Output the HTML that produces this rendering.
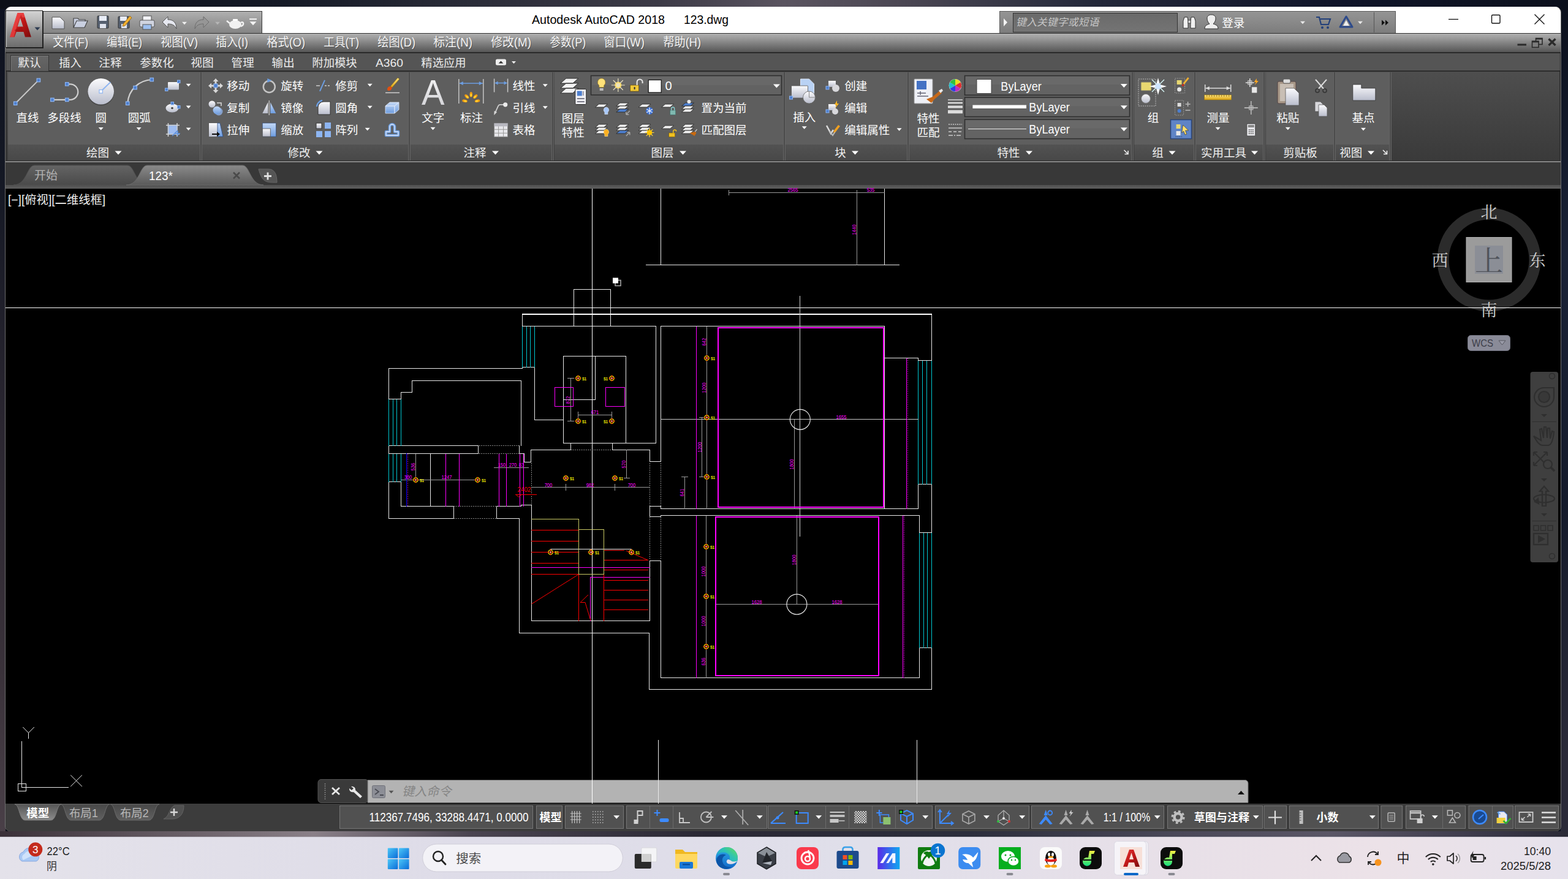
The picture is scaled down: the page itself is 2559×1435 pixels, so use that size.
<!DOCTYPE html><html><head><meta charset="utf-8"><title>AutoCAD</title><style>
html,body{margin:0;padding:0}
body{width:2559px;height:1435px;overflow:hidden;position:relative;font-family:"Liberation Sans","Noto Sans CJK SC",sans-serif;background:#141824}
.a{position:absolute;box-sizing:border-box}
svg text{font-family:"Liberation Sans","Noto Sans CJK SC",sans-serif}
svg text.sf{font-family:"Liberation Serif","Noto Serif CJK SC",serif}

</style></head><body>
<div class="a" style="left:0px;top:0px;width:2559px;height:1366px;background:linear-gradient(90deg,#0c0f18 0%,#151a26 18%,#2a2c38 30%,#3c3a46 42%,#5a5460 50%,#4a4652 58%,#23283a 70%,#10152a 85%,#0b101c 100%)"></div>
<div class="a" style="left:0px;top:14px;width:9px;height:1352px;background:linear-gradient(#0e1220,#141824 20%,#2a2630 50%,#3a323a 80%,#4a4048)"></div>
<div class="a" style="left:2547px;top:14px;width:12px;height:1352px;background:linear-gradient(#0b101c,#1a2236 30%,#141a2a 60%,#2a2a38 90%)"></div>
<div class="a" style="left:0px;top:1357px;width:2559px;height:9px;background:linear-gradient(90deg,#3a3038 0%,#6a6068 12%,#8a8088 20%,#4a4450 30%,#2a2834 45%,#2c2e3c 62%,#4a4858 75%,#5a5666 85%,#3a3848 95%,#2a2a36 100%)"></div>
<div class="a" style="left:8px;top:11px;width:2540px;height:1346px;background:#3a3a3a;border-radius:9px 9px 8px 8px;border:1px solid #6e6e6e"></div>
<div class="a" style="left:9px;top:11px;width:2538px;height:43px;background:#fff;border-radius:9px 9px 0 0"></div>
<div class="a" style="left:9px;top:54px;width:2538px;height:33px;background:linear-gradient(#bababa 0%,#adadad 4%,#989898 28%,#787878 62%,#565656 100%);border-top:1px solid #2c2c2c;border-bottom:2px solid #2a2a2a"></div>
<div class="a" style="left:69px;top:18px;width:359px;height:36px;background:linear-gradient(#b0b0b0,#9a9a9a 45%,#848484);border:1px solid #3c3c3c;border-bottom:none"></div>
<div class="a" style="left:9px;top:17px;width:61px;height:61px;background:linear-gradient(#d2d2d2,#bcbcbc 25%,#8e8e8e 60%,#6c6c6c);border:1px solid #1e1e1e;box-shadow:inset 1px 1px 0 #e0e0e0,1px 1px 0 #222"></div>
<div class="a" style="left:1631px;top:18px;width:647px;height:36px;background:linear-gradient(#949494,#8a8a8a 45%,#7c7c7c);border:1px solid #5a5a5a;border-bottom:none"></div>
<div class="a" style="left:1653px;top:21px;width:269px;height:32px;background:linear-gradient(#6a6a6a,#747474);border:1px solid #333"></div>
<div class="a" style="left:9px;top:87px;width:2538px;height:30px;background:#555;border-left:1px solid #303030;border-right:1px solid #303030;border-bottom:2px solid #2c2c2c"></div>
<div class="a" style="left:17px;top:90px;width:63px;height:26px;background:linear-gradient(#666,#5c5c5c);border:1px solid #353535;border-bottom:none;box-shadow:inset 1px 1px 0 #7a7a7a"></div>
<div class="a" style="left:9px;top:117px;width:2538px;height:146px;background:linear-gradient(#4e4e4e,#3a3a3a);border-left:2px solid #333;border-right:2px solid #333;border-bottom:1.5px solid #2a2a2a"></div>
<div class="a" style="left:9px;top:263px;width:2538px;height:2px;background:#868686"></div>
<div class="a" style="left:13px;top:118px;width:314px;height:118px;background:#5e5e5e"></div>
<div class="a" style="left:13px;top:236px;width:314px;height:26px;background:linear-gradient(#525252,#484848)"></div>
<div class="a" style="left:326px;top:118px;width:1px;height:144px;background:#646464"></div>
<div class="a" style="left:327px;top:118px;width:2px;height:144px;background:#4b4b4b"></div>
<div class="a" style="left:329px;top:118px;width:1px;height:144px;background:#646464"></div>
<div class="a" style="left:330px;top:118px;width:337px;height:118px;background:#5e5e5e"></div>
<div class="a" style="left:330px;top:236px;width:337px;height:26px;background:linear-gradient(#525252,#484848)"></div>
<div class="a" style="left:666px;top:118px;width:1px;height:144px;background:#646464"></div>
<div class="a" style="left:667px;top:118px;width:2px;height:144px;background:#4b4b4b"></div>
<div class="a" style="left:669px;top:118px;width:1px;height:144px;background:#646464"></div>
<div class="a" style="left:670px;top:118px;width:231px;height:118px;background:#5e5e5e"></div>
<div class="a" style="left:670px;top:236px;width:231px;height:26px;background:linear-gradient(#525252,#484848)"></div>
<div class="a" style="left:900px;top:118px;width:1px;height:144px;background:#646464"></div>
<div class="a" style="left:901px;top:118px;width:2px;height:144px;background:#4b4b4b"></div>
<div class="a" style="left:903px;top:118px;width:1px;height:144px;background:#646464"></div>
<div class="a" style="left:905px;top:118px;width:374px;height:118px;background:#5e5e5e"></div>
<div class="a" style="left:905px;top:236px;width:374px;height:26px;background:linear-gradient(#525252,#484848)"></div>
<div class="a" style="left:1278px;top:118px;width:1px;height:144px;background:#646464"></div>
<div class="a" style="left:1279px;top:118px;width:2px;height:144px;background:#4b4b4b"></div>
<div class="a" style="left:1281px;top:118px;width:1px;height:144px;background:#646464"></div>
<div class="a" style="left:1282px;top:118px;width:199px;height:118px;background:#5e5e5e"></div>
<div class="a" style="left:1282px;top:236px;width:199px;height:26px;background:linear-gradient(#525252,#484848)"></div>
<div class="a" style="left:1480px;top:118px;width:1px;height:144px;background:#646464"></div>
<div class="a" style="left:1481px;top:118px;width:2px;height:144px;background:#4b4b4b"></div>
<div class="a" style="left:1483px;top:118px;width:1px;height:144px;background:#646464"></div>
<div class="a" style="left:1484px;top:118px;width:363px;height:118px;background:#5e5e5e"></div>
<div class="a" style="left:1484px;top:236px;width:363px;height:26px;background:linear-gradient(#525252,#484848)"></div>
<div class="a" style="left:1846px;top:118px;width:1px;height:144px;background:#646464"></div>
<div class="a" style="left:1847px;top:118px;width:2px;height:144px;background:#4b4b4b"></div>
<div class="a" style="left:1849px;top:118px;width:1px;height:144px;background:#646464"></div>
<div class="a" style="left:1851px;top:118px;width:98px;height:118px;background:#5e5e5e"></div>
<div class="a" style="left:1851px;top:236px;width:98px;height:26px;background:linear-gradient(#525252,#484848)"></div>
<div class="a" style="left:1948px;top:118px;width:1px;height:144px;background:#646464"></div>
<div class="a" style="left:1949px;top:118px;width:2px;height:144px;background:#4b4b4b"></div>
<div class="a" style="left:1951px;top:118px;width:1px;height:144px;background:#646464"></div>
<div class="a" style="left:1952px;top:118px;width:110px;height:118px;background:#5e5e5e"></div>
<div class="a" style="left:1952px;top:236px;width:110px;height:26px;background:linear-gradient(#525252,#484848)"></div>
<div class="a" style="left:2061px;top:118px;width:1px;height:144px;background:#646464"></div>
<div class="a" style="left:2062px;top:118px;width:2px;height:144px;background:#4b4b4b"></div>
<div class="a" style="left:2064px;top:118px;width:1px;height:144px;background:#646464"></div>
<div class="a" style="left:2066px;top:118px;width:111px;height:118px;background:#5e5e5e"></div>
<div class="a" style="left:2066px;top:236px;width:111px;height:26px;background:linear-gradient(#525252,#484848)"></div>
<div class="a" style="left:2176px;top:118px;width:1px;height:144px;background:#646464"></div>
<div class="a" style="left:2177px;top:118px;width:2px;height:144px;background:#4b4b4b"></div>
<div class="a" style="left:2179px;top:118px;width:1px;height:144px;background:#646464"></div>
<div class="a" style="left:2180px;top:118px;width:88px;height:118px;background:#5e5e5e"></div>
<div class="a" style="left:2180px;top:236px;width:88px;height:26px;background:linear-gradient(#525252,#484848)"></div>
<div class="a" style="left:2267px;top:118px;width:1px;height:144px;background:#646464"></div>
<div class="a" style="left:2268px;top:118px;width:2px;height:144px;background:#4b4b4b"></div>
<div class="a" style="left:2270px;top:118px;width:1px;height:144px;background:#646464"></div>
<div class="a" style="left:9px;top:265px;width:2538px;height:37px;background:#383838"></div>
<div class="a" style="left:9px;top:302px;width:2538px;height:6px;background:linear-gradient(#505050,#5e5e5e)"></div>
<div class="a" style="left:9px;top:308px;width:2538px;height:1004px;background:#000"></div>
<div class="a" style="left:9px;top:1312px;width:2538px;height:45px;background:#3c3c3c;border-radius:0 0 8px 8px"></div>
<div class="a" style="left:0px;top:1366px;width:2559px;height:69px;background:linear-gradient(90deg,#e4e2ea 0%,#dedce8 30%,#e0dfea 55%,#e8e0e8 75%,#ece2e8 88%,#e6e2ec 100%);border-top:1px solid #c8c6d0"></div>
<svg class="a" style="left:0;top:0" width="2559" height="1435" viewBox="0 0 2559 1435">
<defs><linearGradient id="gw" x1="0" y1="0" x2="0" y2="1"><stop offset="0" stop-color="#fbfbfd"/><stop offset="1" stop-color="#b9bdcc"/></linearGradient><linearGradient id="gb" x1="0" y1="0" x2="0" y2="1"><stop offset="0" stop-color="#c3d8f6"/><stop offset="1" stop-color="#6e9de0"/></linearGradient><linearGradient id="gr" x1="0" y1="0" x2="1" y2="1"><stop offset="0" stop-color="#e83a3a"/><stop offset="0.5" stop-color="#c01818"/><stop offset="1" stop-color="#7a0c0c"/></linearGradient><linearGradient id="gy" x1="0" y1="0" x2="0" y2="1"><stop offset="0" stop-color="#ffe680"/><stop offset="1" stop-color="#d8a010"/></linearGradient><linearGradient id="ga" x1="0" y1="0" x2="0" y2="1"><stop offset="0" stop-color="#f6f6f6"/><stop offset="1" stop-color="#cfcfd4"/></linearGradient><linearGradient id="gt1" x1="0" y1="0" x2="0" y2="1"><stop offset="0" stop-color="#646464"/><stop offset="1" stop-color="#4a4a4a"/></linearGradient><linearGradient id="gt2" x1="0" y1="0" x2="0" y2="1"><stop offset="0" stop-color="#8a8a8a"/><stop offset="1" stop-color="#5a5a5a"/></linearGradient><linearGradient id="gl1" x1="0" y1="0" x2="0" y2="1"><stop offset="0" stop-color="#555"/><stop offset="1" stop-color="#8c8c8c"/></linearGradient><linearGradient id="gl2" x1="0" y1="0" x2="0" y2="1"><stop offset="0" stop-color="#484848"/><stop offset="1" stop-color="#606060"/></linearGradient><linearGradient id="tw" x1="0" y1="0" x2="1" y2="1"><stop offset="0" stop-color="#4cc8f8"/><stop offset="1" stop-color="#0a6cd8"/></linearGradient><linearGradient id="tma" x1="0" y1="0" x2="1" y2="0"><stop offset="0" stop-color="#5a2ae8"/><stop offset="1" stop-color="#10a8f0"/></linearGradient><linearGradient id="tqm" x1="0" y1="0" x2="0" y2="1"><stop offset="0" stop-color="#f8f040"/><stop offset="1" stop-color="#10e080"/></linearGradient><linearGradient id="ted" x1="0" y1="0" x2="0" y2="1"><stop offset="0" stop-color="#2aa8e8"/><stop offset="1" stop-color="#1468c8"/></linearGradient><linearGradient id="ted2" x1="0" y1="1" x2="1" y2="0"><stop offset="0" stop-color="#1b9de2"/><stop offset=".6" stop-color="#30c4b0"/><stop offset="1" stop-color="#6be04e"/></linearGradient></defs>
<rect x="519" y="1272.5" width="82" height="38" rx="5" fill="#3a3a3a" stroke="#555" stroke-width="1"/>
<path d="M600 1273.5H2032a5 5 0 0 1 5 5V1310.5H600Z" fill="#b3b3b3" stroke="#6a6a6a" stroke-width="1"/>
<circle cx="2430" cy="424" r="75" fill="none" stroke="#2b2b2b" stroke-width="19"/>
<path d="M966.5 308V1312M9 502.5H2547" fill="none" stroke="#ffffff" stroke-width="1" shape-rendering="crispEdges"/>
<path d="M936 472.5H997M936 532.5H997M936.5 472V533M996.5 472V533M1078.5 308V433M1054 432.5H1468M1443.5 308V433M852.5 512V533M1520.5 512V589M852 532.5H1071M1070.5 532V724M852 599.5H873M852.5 599V602M872.5 599V686M872 685.5H920M634 601.5H853M634.5 601V652M634 651.5H655M654.5 640V652M654 640.5H673M672.5 621V641M672 621.5H851M850.5 621V728M634 727.5H781M780.5 727V741M634 740.5H781M634.5 727V741M847.5 727V741M847 740.5H856M855.5 740V755M855 754.5H867M866.5 734V755M866 734.5H932M931.5 723V735M919 723.5H1071M919.5 581V724M919 581.5H1022M1021.5 581V724M971.5 581V653M919 652.5H972M999.5 723V735M999 734.5H1061M1060.5 734V754M1060 753.5H1079M1078.5 532V754M1078 532.5H1444M1443.5 532V585M1443 584.5H1499M1498.5 584V589M1443.5 584V831M1078 830.5H1499M1078 841.5H1501M1500.5 841V870M1500 869.5H1521M1520.5 790V870M1498 790.5H1521M1498.5 790V831M1498 588.5H1521M1500 1057.5H1521M1500.5 1057V1107M1078 1106.5H1501M1078.5 915V1107M1520.5 1057V1126M1059 1125.5H1521M1059.5 1033V1126M847 1033.5H1060M847.5 846V1034M867.5 824V1014M867 1013.5H1061M1060.5 915V1014M1060 915.5H1079M1060 826.5H1079M1060.5 826V844M1060 843.5H1079M1078.5 826V831M1078.5 841V844M634 786.5H655M634.5 740V847M654.5 786V827M654 826.5H741M810 826.5H851M740.5 826V847M634 846.5H741M810 846.5H848M810.5 826V847M702.5 740V827M850.5 824V827M850 824.5H868M898 896.5H1031M1074.5 1208V1312M1496.5 1208V1312M35.5 1210V1286M35 1285.5H112M29 1279.5H43M29 1291.5H43M29.5 1279V1292M42.5 1279V1292" fill="none" stroke="#e8e8e8" stroke-width="1" shape-rendering="crispEdges"/>
<path d="M1189 314.5H1444M1398.5 314V433M1189.5 310V319M1398.5 310V319M1153.5 533V831M1145.5 681V779M1117.5 778V831M1296.5 684V831M1152.5 842V1107M1300.5 842V987M1168 986.5H1434M1141 681.5H1154M1141 778.5H1154M1112 778.5H1123M678.5 741V784M654 783.5H780M806 763.5H863M867 795.5H1061M923.5 790V801M1003.5 790V801M1022.5 734V781M1018 780.5H1028M931.5 617V688M926 617.5H937M926 687.5H937M943 677.5H999M943.5 672V683M998.5 672V683" fill="none" stroke="#9a9a9a" stroke-width="1" shape-rendering="crispEdges"/>
<path d="M852 512.5H1521" fill="none" stroke="#ffffff" stroke-width="2" shape-rendering="crispEdges"/>
<path d="M852.5 533V600M859.5 533V600M865.5 533V600M872.5 533V600M634.5 652V728M641.5 652V728M647.5 652V728M654.5 652V728M1498.5 589V791M1505.5 589V791M1512.5 589V791M1520.5 589V791M1500.5 870V1058M1507.5 870V1058M1513.5 870V1058M1520.5 870V1058M634.5 741V787M641.5 741V787M647.5 741V787M654.5 741V787" fill="none" stroke="#00c8d2" stroke-width="1" shape-rendering="crispEdges"/>
<path d="M782 727.5H848M782 740.5H848M933 734.5H1000M742 826.5H811M742 846.5H811M867.5 756V823M1060.5 756V826M1060.5 845V914M1078.5 756V826M1078.5 845V914" fill="none" stroke="#e8e8e8" stroke-width="1" shape-rendering="crispEdges" stroke-dasharray="1 2"/>
<path d="M1078 684.5H1499" fill="none" stroke="#c8c8c8" stroke-width="1" shape-rendering="crispEdges"/>
<path d="M1305.5 483V876" fill="none" stroke="#d0d0d0" stroke-width="1" shape-rendering="crispEdges"/>
<path d="M663.5 740V827" fill="none" stroke="#0000ff" stroke-width="1" shape-rendering="crispEdges"/>
<path d="M665.5 741V827M1481.5 585V831M1475.5 842V1107" fill="none" stroke="#ff00ff" stroke-width="1" shape-rendering="crispEdges" stroke-dasharray="1 2"/>
<path d="M727.5 741V827M749.5 741V827M814.5 741V827M826.5 741V827M848.5 741V827M854.5 741V827M1136.5 533V831M1136.5 842V1107M1479.5 585V831M1473.5 842V1107M867 926.5H1061M963 942.5H1061M963.5 942V1014M905 632.5H936M905 663.5H936M905.5 632V664M935.5 632V664M988 632.5H1020M988 663.5H1020M988.5 632V664M1019.5 632V664" fill="none" stroke="#ff00ff" stroke-width="1" shape-rendering="crispEdges"/>
<path d="M867 865.5H944M867 883.5H944M867 901.5H944M867 919.5H944M867 937.5H944M985 914.5H1058M985 930.5H1058M985 947.5H1058M985 963.5H1058M985 979.5H1058M985 995.5H1058M985 898.5H1019M944.5 937V1014M985.5 937V1014M841 807.5H876" fill="none" stroke="#ff0000" stroke-width="1" shape-rendering="crispEdges"/>
<path d="M867.5 986L944.5 937.5M1022 899L1057.5 914.5M960 971L947 983.5L955 983.5L964 1013M842 807.5L851 807.5L846.5 811.5L842 807.5" fill="none" stroke="#ff0000" stroke-width="1" shape-rendering="geometricPrecision"/>
<path d="M867 847.5H945M944.5 847V938M944 937.5H986M985.5 864V938M944 864.5H986" fill="none" stroke="#c8c864" stroke-width="1" shape-rendering="crispEdges"/>
<path d="M37.3 1187L46.5 1196.4L55.8 1187M46.5 1196.4L46.5 1206M115.2 1265.4L133.9 1284M133.9 1265.4L115.2 1284" fill="none" stroke="#e8e8e8" stroke-width="1" shape-rendering="geometricPrecision"/>
<rect x="1171.5" y="535" width="270" height="293" fill="none" stroke="#ff00ff" stroke-width="2" shape-rendering="crispEdges"/>
<rect x="1168" y="844" width="265.5" height="259" fill="none" stroke="#ff00ff" stroke-width="2" shape-rendering="crispEdges"/>
<circle cx="1305.8" cy="684.8" r="16.5" fill="none" stroke="#e8e8e8" stroke-width="1.2"/>
<circle cx="1300.4" cy="986.6" r="16.5" fill="none" stroke="#e8e8e8" stroke-width="1.2"/>
<g transform="translate(943.5,617.5)"><circle r="3.6" fill="none" stroke="#ffe000" stroke-width="1.3"/><path d="M-5 0H5M0 -5V5" stroke="#ff2000" stroke-width="1"/><circle r="1.2" fill="#ffb0a0"/></g>
<text x="950" y="621" font-size="8" font-weight="bold" fill="#ffff00" textLength="7" lengthAdjust="spacingAndGlyphs">S1</text>
<g transform="translate(943.5,687.5)"><circle r="3.6" fill="none" stroke="#ffe000" stroke-width="1.3"/><path d="M-5 0H5M0 -5V5" stroke="#ff2000" stroke-width="1"/><circle r="1.2" fill="#ffb0a0"/></g>
<text x="950" y="691" font-size="8" font-weight="bold" fill="#ffff00" textLength="7" lengthAdjust="spacingAndGlyphs">S1</text>
<g transform="translate(678.5,783.5)"><circle r="3.6" fill="none" stroke="#ffe000" stroke-width="1.3"/><path d="M-5 0H5M0 -5V5" stroke="#ff2000" stroke-width="1"/><circle r="1.2" fill="#ffb0a0"/></g>
<text x="685" y="787" font-size="8" font-weight="bold" fill="#ffff00" textLength="7" lengthAdjust="spacingAndGlyphs">S1</text>
<g transform="translate(779.5,783.5)"><circle r="3.6" fill="none" stroke="#ffe000" stroke-width="1.3"/><path d="M-5 0H5M0 -5V5" stroke="#ff2000" stroke-width="1"/><circle r="1.2" fill="#ffb0a0"/></g>
<text x="786" y="787" font-size="8" font-weight="bold" fill="#ffff00" textLength="7" lengthAdjust="spacingAndGlyphs">S1</text>
<g transform="translate(923.5,780.5)"><circle r="3.6" fill="none" stroke="#ffe000" stroke-width="1.3"/><path d="M-5 0H5M0 -5V5" stroke="#ff2000" stroke-width="1"/><circle r="1.2" fill="#ffb0a0"/></g>
<text x="930" y="784" font-size="8" font-weight="bold" fill="#ffff00" textLength="7" lengthAdjust="spacingAndGlyphs">S1</text>
<g transform="translate(1003.5,780.5)"><circle r="3.6" fill="none" stroke="#ffe000" stroke-width="1.3"/><path d="M-5 0H5M0 -5V5" stroke="#ff2000" stroke-width="1"/><circle r="1.2" fill="#ffb0a0"/></g>
<text x="1010" y="784" font-size="8" font-weight="bold" fill="#ffff00" textLength="7" lengthAdjust="spacingAndGlyphs">S1</text>
<g transform="translate(1153.5,584.5)"><circle r="3.6" fill="none" stroke="#ffe000" stroke-width="1.3"/><path d="M-5 0H5M0 -5V5" stroke="#ff2000" stroke-width="1"/><circle r="1.2" fill="#ffb0a0"/></g>
<text x="1160" y="588" font-size="8" font-weight="bold" fill="#ffff00" textLength="7" lengthAdjust="spacingAndGlyphs">S1</text>
<g transform="translate(1153.5,681.5)"><circle r="3.6" fill="none" stroke="#ffe000" stroke-width="1.3"/><path d="M-5 0H5M0 -5V5" stroke="#ff2000" stroke-width="1"/><circle r="1.2" fill="#ffb0a0"/></g>
<text x="1160" y="685" font-size="8" font-weight="bold" fill="#ffff00" textLength="7" lengthAdjust="spacingAndGlyphs">S1</text>
<g transform="translate(1153.5,778.5)"><circle r="3.6" fill="none" stroke="#ffe000" stroke-width="1.3"/><path d="M-5 0H5M0 -5V5" stroke="#ff2000" stroke-width="1"/><circle r="1.2" fill="#ffb0a0"/></g>
<text x="1160" y="782" font-size="8" font-weight="bold" fill="#ffff00" textLength="7" lengthAdjust="spacingAndGlyphs">S1</text>
<g transform="translate(1152.5,892.5)"><circle r="3.6" fill="none" stroke="#ffe000" stroke-width="1.3"/><path d="M-5 0H5M0 -5V5" stroke="#ff2000" stroke-width="1"/><circle r="1.2" fill="#ffb0a0"/></g>
<text x="1159" y="896" font-size="8" font-weight="bold" fill="#ffff00" textLength="7" lengthAdjust="spacingAndGlyphs">S1</text>
<g transform="translate(1152.5,973.5)"><circle r="3.6" fill="none" stroke="#ffe000" stroke-width="1.3"/><path d="M-5 0H5M0 -5V5" stroke="#ff2000" stroke-width="1"/><circle r="1.2" fill="#ffb0a0"/></g>
<text x="1159" y="977" font-size="8" font-weight="bold" fill="#ffff00" textLength="7" lengthAdjust="spacingAndGlyphs">S1</text>
<g transform="translate(1152.5,1055.5)"><circle r="3.6" fill="none" stroke="#ffe000" stroke-width="1.3"/><path d="M-5 0H5M0 -5V5" stroke="#ff2000" stroke-width="1"/><circle r="1.2" fill="#ffb0a0"/></g>
<text x="1159" y="1059" font-size="8" font-weight="bold" fill="#ffff00" textLength="7" lengthAdjust="spacingAndGlyphs">S1</text>
<g transform="translate(898.5,901.5)"><circle r="3.6" fill="none" stroke="#ffe000" stroke-width="1.3"/><path d="M-5 0H5M0 -5V5" stroke="#ff2000" stroke-width="1"/><circle r="1.2" fill="#ffb0a0"/></g>
<text x="905" y="905" font-size="8" font-weight="bold" fill="#ffff00" textLength="7" lengthAdjust="spacingAndGlyphs">S1</text>
<g transform="translate(964.5,901.5)"><circle r="3.6" fill="none" stroke="#ffe000" stroke-width="1.3"/><path d="M-5 0H5M0 -5V5" stroke="#ff2000" stroke-width="1"/><circle r="1.2" fill="#ffb0a0"/></g>
<text x="971" y="905" font-size="8" font-weight="bold" fill="#ffff00" textLength="7" lengthAdjust="spacingAndGlyphs">S1</text>
<g transform="translate(1030.5,901.5)"><circle r="3.6" fill="none" stroke="#ffe000" stroke-width="1.3"/><path d="M-5 0H5M0 -5V5" stroke="#ff2000" stroke-width="1"/><circle r="1.2" fill="#ffb0a0"/></g>
<text x="1037" y="905" font-size="8" font-weight="bold" fill="#ffff00" textLength="7" lengthAdjust="spacingAndGlyphs">S1</text>
<g transform="translate(998.5,617.5)"><circle r="3.6" fill="none" stroke="#ffe000" stroke-width="1.3"/><path d="M-5 0H5M0 -5V5" stroke="#ff2000" stroke-width="1"/><circle r="1.2" fill="#ffb0a0"/></g>
<text x="985" y="621" font-size="8" font-weight="bold" fill="#ffff00" textLength="7" lengthAdjust="spacingAndGlyphs">S1</text>
<g transform="translate(998.5,687.5)"><circle r="3.6" fill="none" stroke="#ffe000" stroke-width="1.3"/><path d="M-5 0H5M0 -5V5" stroke="#ff2000" stroke-width="1"/><circle r="1.2" fill="#ffb0a0"/></g>
<text x="985" y="691" font-size="8" font-weight="bold" fill="#ffff00" textLength="7" lengthAdjust="spacingAndGlyphs">S1</text>
<text x="1294" y="313" font-size="8.5" fill="#ff00ff" text-anchor="middle" textLength="17" lengthAdjust="spacingAndGlyphs">2565</text>
<text x="1421" y="313" font-size="8.5" fill="#ff00ff" text-anchor="middle" textLength="12.75" lengthAdjust="spacingAndGlyphs">535</text>
<text transform="translate(1397,375) rotate(-90)" font-size="8.5" fill="#ff00ff" text-anchor="middle" textLength="17" lengthAdjust="spacingAndGlyphs">1440</text>
<text transform="translate(1152,558) rotate(-90)" font-size="8.5" fill="#ff00ff" text-anchor="middle" textLength="12.75" lengthAdjust="spacingAndGlyphs">642</text>
<text transform="translate(1152,633) rotate(-90)" font-size="8.5" fill="#ff00ff" text-anchor="middle" textLength="17" lengthAdjust="spacingAndGlyphs">1200</text>
<text transform="translate(1145,730) rotate(-90)" font-size="8.5" fill="#ff00ff" text-anchor="middle" textLength="17" lengthAdjust="spacingAndGlyphs">1200</text>
<text transform="translate(1116,804) rotate(-90)" font-size="8.5" fill="#ff00ff" text-anchor="middle" textLength="12.75" lengthAdjust="spacingAndGlyphs">641</text>
<text transform="translate(1295,758) rotate(-90)" font-size="8.5" fill="#ff00ff" text-anchor="middle" textLength="17" lengthAdjust="spacingAndGlyphs">1800</text>
<text x="1373" y="684" font-size="8.5" fill="#ff00ff" text-anchor="middle" textLength="17" lengthAdjust="spacingAndGlyphs">1655</text>
<text transform="translate(1151,933) rotate(-90)" font-size="8.5" fill="#ff00ff" text-anchor="middle" textLength="17" lengthAdjust="spacingAndGlyphs">1000</text>
<text transform="translate(1151,1014) rotate(-90)" font-size="8.5" fill="#ff00ff" text-anchor="middle" textLength="17" lengthAdjust="spacingAndGlyphs">1000</text>
<text transform="translate(1151,1080) rotate(-90)" font-size="8.5" fill="#ff00ff" text-anchor="middle" textLength="12.75" lengthAdjust="spacingAndGlyphs">636</text>
<text transform="translate(1299,914) rotate(-90)" font-size="8.5" fill="#ff00ff" text-anchor="middle" textLength="17" lengthAdjust="spacingAndGlyphs">1800</text>
<text x="1235" y="986" font-size="8.5" fill="#ff00ff" text-anchor="middle" textLength="17" lengthAdjust="spacingAndGlyphs">1628</text>
<text x="1366" y="986" font-size="8.5" fill="#ff00ff" text-anchor="middle" textLength="17" lengthAdjust="spacingAndGlyphs">1628</text>
<text transform="translate(677,762) rotate(-90)" font-size="8.5" fill="#ff00ff" text-anchor="middle" textLength="12.75" lengthAdjust="spacingAndGlyphs">536</text>
<text x="666" y="782" font-size="8.5" fill="#ff00ff" text-anchor="middle" textLength="12.75" lengthAdjust="spacingAndGlyphs">300</text>
<text x="729" y="782" font-size="8.5" fill="#ff00ff" text-anchor="middle" textLength="17" lengthAdjust="spacingAndGlyphs">1247</text>
<text x="819" y="762" font-size="8.5" fill="#ff00ff" text-anchor="middle" textLength="12.75" lengthAdjust="spacingAndGlyphs">150</text>
<text x="837" y="762" font-size="8.5" fill="#ff00ff" text-anchor="middle" textLength="12.75" lengthAdjust="spacingAndGlyphs">270</text>
<text x="851" y="762" font-size="8.5" fill="#ff00ff" text-anchor="middle" textLength="8.5" lengthAdjust="spacingAndGlyphs">83</text>
<text x="895" y="795" font-size="8.5" fill="#ff00ff" text-anchor="middle" textLength="12.75" lengthAdjust="spacingAndGlyphs">700</text>
<text x="963" y="795" font-size="8.5" fill="#ff00ff" text-anchor="middle" textLength="12.75" lengthAdjust="spacingAndGlyphs">982</text>
<text x="1031" y="795" font-size="8.5" fill="#ff00ff" text-anchor="middle" textLength="12.75" lengthAdjust="spacingAndGlyphs">700</text>
<text transform="translate(1021,758) rotate(-90)" font-size="8.5" fill="#ff00ff" text-anchor="middle" textLength="12.75" lengthAdjust="spacingAndGlyphs">570</text>
<text transform="translate(930,653) rotate(-90)" font-size="8.5" fill="#ff00ff" text-anchor="middle" textLength="12.75" lengthAdjust="spacingAndGlyphs">872</text>
<text x="971" y="676" font-size="8.5" fill="#ff00ff" text-anchor="middle" textLength="12.75" lengthAdjust="spacingAndGlyphs">671</text>
<text x="855.5" y="803" font-size="11" fill="#ff0000" text-anchor="middle" textLength="22" lengthAdjust="spacingAndGlyphs">2402</text>
<rect x="1004" y="457.5" width="9" height="9" fill="none" stroke="#aaa" stroke-width="1.5"/><rect x="1000" y="453.5" width="9" height="9" fill="#fff"/>
<g transform="translate(13.0,332.6)" fill="#f0f0f0"><text x="0" y="0" font-size="19.5" textLength="159.1" lengthAdjust="spacingAndGlyphs">[−][俯视][二维线框]</text></g>
<rect x="2393" y="387.5" width="74" height="73" fill="#9b9b9b" stroke="#b0b0b0" stroke-width="1"/>
<rect x="2407" y="401" width="46" height="46" fill="#8b8e96"/>
<g transform="translate(2407.0,441.8)" fill="#50535a"><text class="sf" x="0" y="0" font-size="46">上</text></g>
<g transform="translate(2416.5,355.9)" fill="#cfcfcf"><text class="sf" x="0" y="0" font-size="27">北</text></g>
<g transform="translate(2416.5,515.9)" fill="#cfcfcf"><text class="sf" x="0" y="0" font-size="27">南</text></g>
<g transform="translate(2336.5,434.9)" fill="#cfcfcf"><text class="sf" x="0" y="0" font-size="27">西</text></g>
<g transform="translate(2495.5,434.9)" fill="#cfcfcf"><text class="sf" x="0" y="0" font-size="27">东</text></g>
<rect x="2395.5" y="547.5" width="69" height="25" rx="5" fill="#8a8b98" stroke="#6e6f7c"/>
<text x="2402" y="566" font-size="16" fill="#3c3d48" textLength="35" lengthAdjust="spacingAndGlyphs">WCS</text>
<path d="M2446 556h11l-5.5 7z" fill="#9a9ba8" stroke="#55565f" stroke-width="1"/>
<rect x="2497.5" y="607" width="45.5" height="311" rx="4" fill="#3f3f3f"/>
<g fill="none" stroke="#2f2f2f" stroke-width="2.2">
<circle cx="2533" cy="614" r="4.5" stroke-width="1.5"/><circle cx="2533" cy="908" r="4.5" stroke-width="1.5"/>
<path d="M2504 648a16 16 0 1 0 32 0v-15h-16a16 16 0 0 0 -16 15z"/><circle cx="2520" cy="648" r="9" fill="#383838"/>
<path d="M2500.500 688.500H2540M2500.500 850.500H2540" stroke-width="1"/>
<path d="M2503 712c5 8 8 14 14 15h10c6-1 8-12 9-22l-3-1-3 12-1-17-3 0-1 16-2-18h-3l-1 18-3-15-3 1 2 18z"/>
<path d="M2503 738l22 22M2525 738l-22 22M2503 738h6M2503 738v6M2525 738h-6M2525 738v6M2503 760h6M2503 760v-6"/><circle cx="2526" cy="758" r="7" fill="#3f3f3f"/><path d="M2531 763l6 6" stroke-width="3.5"/>
<path d="M2517 826v-24h-4l7-8 7 8h-4v24z"/><ellipse cx="2520" cy="814" rx="17" ry="6.500"/><path d="M2510 814l-5 5 6 3z" fill="#2f2f2f"/>
<rect x="2503" y="858" width="8" height="8" stroke-width="1.5"/><rect x="2514.500" y="858" width="8" height="8" stroke-width="1.5"/><rect x="2526" y="858" width="8" height="8" stroke-width="1.5"/><rect x="2503" y="871" width="23" height="18"/>
</g>
<path d="M2515 676h10l-5 5zM2515 781h10l-5 5zM2515 838h10l-5 5zM2510 873.500v13l12-6.500z" fill="#2f2f2f"/>
<g transform="translate(16,21) scale(.833,.94) translate(-17,-22)"><path d="M17 64L32 22h12l15 42h-12l-3-9H30l-4 9zM32 46h11l-5.500-15z" fill="url(#gr)"/><path d="M32 22h12l3 8h-6l-2-5-8 20-6 19h-8z" fill="#ff5a5a" opacity=".5"/><path d="M26 52l14-6 4 9H30z" fill="#a01010" opacity=".6"/></g>
<path d="M56.5 44.5h9l-4.5 5z" fill="#2c3a50"/>
<g transform="translate(95,37)"><path d="M-10-9h13l7 7v12h-20z" fill="url(#gw)" stroke="#555" stroke-width="1"/></g>
<g transform="translate(131,37)"><path d="M-11 8l5-11h18l-5 11zM-11 8v-15h7l2 2h10v3" fill="#c9cfe0" stroke="#444" stroke-width="1.2"/></g>
<g transform="translate(168,36)"><rect x="-9" y="-10" width="18" height="20" rx="1" fill="#566070" stroke="#333"/><rect x="-6" y="-10" width="12" height="8" fill="#e8ecf6"/><rect x="-5" y="3" width="10" height="7" fill="#dfe3ee"/></g>
<g transform="translate(203,36)"><rect x="-10" y="-9" width="18" height="19" rx="1" fill="#566070" stroke="#333"/><rect x="-7" y="-9" width="11" height="7" fill="#e8ecf6"/><rect x="-5" y="3" width="9" height="7" fill="#dfe3ee"/><path d="M-2 3l11-13 3 3-11 13-4 1z" fill="#f0b030" stroke="#8a5a10" stroke-width=".8"/></g>
<g transform="translate(240,37)"><rect x="-7" y="-11" width="14" height="8" fill="#f4f4f8" stroke="#555"/><rect x="-12" y="-4" width="24" height="11" rx="2" fill="#d0d4e0" stroke="#555"/><rect x="-7" y="3" width="14" height="8" fill="#9ec0f0" stroke="#555"/></g>
<g transform="translate(276,37)"><path d="M-11 -1l9-9v5c10 0 14 6 14 15-3-6-7-8-14-8v6z" fill="#e6e8f0" stroke="#555" stroke-width="1"/></g>
<path d="M297 35.75h8l-4 4.5z" fill="#f0f0f0"/>
<g transform="translate(330,37)"><path d="M11 -1l-9-9v5c-10 0-14 6-14 15 3-6 7-8 14-8v6z" fill="#969696" stroke="#6c6c6c" stroke-width="1"/></g>
<path d="M351 35.75h8l-4 4.5z" fill="#b6b6b6"/>
<g transform="translate(384,38)"><ellipse cx="0" cy="2" rx="10" ry="7" fill="#f2f2f2"/><path d="M-9 0l-5-4M9 -1c5-3 6 4 0 6" stroke="#f2f2f2" stroke-width="2.5" fill="none"/><rect x="-4" y="-7" width="8" height="3" rx="1" fill="#fff"/></g>
<path d="M407 31.200h12" stroke="#f4f4f4" stroke-width="2"/>
<path d="M407.5 35.3h11l-5.5 6z" fill="#f4f4f4"/>
<text x="868" y="39" font-size="19.5" fill="#000" textLength="217" lengthAdjust="spacingAndGlyphs">Autodesk AutoCAD 2018</text>
<text x="1116" y="39" font-size="19.5" fill="#000" textLength="73" lengthAdjust="spacingAndGlyphs">123.dwg</text>
<path d="M1638 30l6 6.500-6 6.500z" fill="#f4f4f4"/>
<g transform="translate(1658.3,42.0) scale(1.0254,1) skewX(-12)" fill="#c4c4c4"><text x="0" y="0" font-size="16.5">键入关键字或短语</text></g>
<g transform="translate(1941,37)"><path d="M-10 9v-12l2-6h5l1 6v12zM10 9v-12l-2-6h-5l-1 6v12z" fill="#f0f0f0" stroke="#333" stroke-width="1"/><rect x="-2" y="-4" width="4" height="5" fill="#ddd" stroke="#333" stroke-width=".8"/></g>
<g transform="translate(1977,36)"><path d="M-11 11c0-6 5-7 8-8-3-3-4-6-4-9 0-4 3-6 7-6s7 2 7 6c0 3-1 6-4 9 3 1 8 2 8 8z" fill="#eee" stroke="#333" stroke-width="1"/></g>
<g transform="translate(1994.3,43.8)" fill="#fff"><text x="0" y="0" font-size="18.5">登录</text></g>
<path d="M2122 34.75h8l-4 4.5z" fill="#e8e8e8"/>
<g transform="translate(2160,37)"><path d="M-12-9h5l3 12h12l3-9h-16" fill="none" stroke="#23407a" stroke-width="2.2"/><circle cx="-2" cy="8" r="2" fill="#23407a"/><circle cx="7" cy="8" r="2" fill="#23407a"/></g>
<g transform="translate(2197,36)"><path d="M0-9l10 17h-20z" fill="none" stroke="#2d4a8a" stroke-width="3" stroke-linejoin="round"/><path d="M0-3l5 9h-10z" fill="#eee"/></g>
<path d="M2216 34.75h8l-4 4.5z" fill="#e8e8e8"/>
<path d="M2242.500 20v33" stroke="#555"/>
<path d="M2255 32.500l5 4.500-5 4.500zM2261 32.500l5 4.500-5 4.500z" fill="#111"/>
<path d="M2364 31.500h16" stroke="#111" stroke-width="1.3"/><rect x="2434.500" y="24.500" width="13.500" height="13.500" rx="1.500" fill="none" stroke="#111" stroke-width="1.400"/><path d="M2504.500 23.500l16 16M2520.500 23.500l-16 16" stroke="#111" stroke-width="1.400"/>
<g transform="translate(87.3,77.1) scale(0.8946,1)" fill="#222" opacity="0.35"><text x="0" y="0" font-size="20" textLength="64.5" lengthAdjust="spacingAndGlyphs">文件(F)</text></g>
<g transform="translate(86.3,76.1) scale(0.8946,1)" fill="#f4f4f4"><text x="0" y="0" font-size="20" textLength="64.5" lengthAdjust="spacingAndGlyphs">文件(F)</text></g>
<g transform="translate(175.3,77.1) scale(0.8797,1)" fill="#222" opacity="0.35"><text x="0" y="0" font-size="20" textLength="65.6" lengthAdjust="spacingAndGlyphs">编辑(E)</text></g>
<g transform="translate(174.3,76.1) scale(0.8797,1)" fill="#f4f4f4"><text x="0" y="0" font-size="20" textLength="65.6" lengthAdjust="spacingAndGlyphs">编辑(E)</text></g>
<g transform="translate(263.3,77.1) scale(0.9260,1)" fill="#222" opacity="0.35"><text x="0" y="0" font-size="20" textLength="65.6" lengthAdjust="spacingAndGlyphs">视图(V)</text></g>
<g transform="translate(262.3,76.1) scale(0.9260,1)" fill="#f4f4f4"><text x="0" y="0" font-size="20" textLength="65.6" lengthAdjust="spacingAndGlyphs">视图(V)</text></g>
<g transform="translate(353.3,77.1) scale(0.9072,1)" fill="#222" opacity="0.35"><text x="0" y="0" font-size="20" textLength="58.1" lengthAdjust="spacingAndGlyphs">插入(I)</text></g>
<g transform="translate(352.3,76.1) scale(0.9072,1)" fill="#f4f4f4"><text x="0" y="0" font-size="20" textLength="58.1" lengthAdjust="spacingAndGlyphs">插入(I)</text></g>
<g transform="translate(436.3,77.1) scale(0.9265,1)" fill="#222" opacity="0.35"><text x="0" y="0" font-size="20" textLength="67.7" lengthAdjust="spacingAndGlyphs">格式(O)</text></g>
<g transform="translate(435.3,76.1) scale(0.9265,1)" fill="#f4f4f4"><text x="0" y="0" font-size="20" textLength="67.7" lengthAdjust="spacingAndGlyphs">格式(O)</text></g>
<g transform="translate(529.3,77.1) scale(0.8946,1)" fill="#222" opacity="0.35"><text x="0" y="0" font-size="20" textLength="64.5" lengthAdjust="spacingAndGlyphs">工具(T)</text></g>
<g transform="translate(528.3,76.1) scale(0.8946,1)" fill="#f4f4f4"><text x="0" y="0" font-size="20" textLength="64.5" lengthAdjust="spacingAndGlyphs">工具(T)</text></g>
<g transform="translate(617.3,77.1) scale(0.9263,1)" fill="#222" opacity="0.35"><text x="0" y="0" font-size="20" textLength="66.7" lengthAdjust="spacingAndGlyphs">绘图(D)</text></g>
<g transform="translate(616.3,76.1) scale(0.9263,1)" fill="#f4f4f4"><text x="0" y="0" font-size="20" textLength="66.7" lengthAdjust="spacingAndGlyphs">绘图(D)</text></g>
<g transform="translate(708.2,77.1) scale(0.9567,1)" fill="#222" opacity="0.35"><text x="0" y="0" font-size="20" textLength="66.7" lengthAdjust="spacingAndGlyphs">标注(N)</text></g>
<g transform="translate(707.2,76.1) scale(0.9567,1)" fill="#f4f4f4"><text x="0" y="0" font-size="20" textLength="66.7" lengthAdjust="spacingAndGlyphs">标注(N)</text></g>
<g transform="translate(802.2,77.1) scale(0.9561,1)" fill="#222" opacity="0.35"><text x="0" y="0" font-size="20" textLength="68.8" lengthAdjust="spacingAndGlyphs">修改(M)</text></g>
<g transform="translate(801.2,76.1) scale(0.9561,1)" fill="#f4f4f4"><text x="0" y="0" font-size="20" textLength="68.8" lengthAdjust="spacingAndGlyphs">修改(M)</text></g>
<g transform="translate(898.3,77.1) scale(0.8951,1)" fill="#222" opacity="0.35"><text x="0" y="0" font-size="20" textLength="65.6" lengthAdjust="spacingAndGlyphs">参数(P)</text></g>
<g transform="translate(897.3,76.1) scale(0.8951,1)" fill="#f4f4f4"><text x="0" y="0" font-size="20" textLength="65.6" lengthAdjust="spacingAndGlyphs">参数(P)</text></g>
<g transform="translate(986.2,77.1) scale(0.9414,1)" fill="#222" opacity="0.35"><text x="0" y="0" font-size="20" textLength="70.9" lengthAdjust="spacingAndGlyphs">窗口(W)</text></g>
<g transform="translate(985.2,76.1) scale(0.9414,1)" fill="#f4f4f4"><text x="0" y="0" font-size="20" textLength="70.9" lengthAdjust="spacingAndGlyphs">窗口(W)</text></g>
<g transform="translate(1083.3,77.1) scale(0.9263,1)" fill="#222" opacity="0.35"><text x="0" y="0" font-size="20" textLength="66.7" lengthAdjust="spacingAndGlyphs">帮助(H)</text></g>
<g transform="translate(1082.3,76.1) scale(0.9263,1)" fill="#f4f4f4"><text x="0" y="0" font-size="20" textLength="66.7" lengthAdjust="spacingAndGlyphs">帮助(H)</text></g>
<path d="M2476.500 73h14.500" stroke="#2b2b2b" stroke-width="3"/><rect x="2506.500" y="62.500" width="10.500" height="10" fill="none" stroke="#2b2b2b" stroke-width="1.600"/><path d="M2506 63.300h11.500" stroke="#2b2b2b" stroke-width="2.600"/><rect x="2500.500" y="67.300" width="10.500" height="10" fill="#7c7c7c" stroke="#2b2b2b" stroke-width="1.600"/><path d="M2500 68h11.500" stroke="#2b2b2b" stroke-width="2.600"/><path d="M2527.500 63.500l11 10.500M2538.500 63.500l-11 10.500" stroke="#2b2b2b" stroke-width="3.400"/>
<g transform="translate(29.2,109.3) scale(1.0135,1)" fill="#ececec"><text x="0" y="0" font-size="18.5">默认</text></g>
<g transform="translate(96.3,109.3) scale(0.9854,1)" fill="#ececec"><text x="0" y="0" font-size="18.5">插入</text></g>
<g transform="translate(161.2,109.3) scale(1.0135,1)" fill="#ececec"><text x="0" y="0" font-size="18.5">注释</text></g>
<g transform="translate(228.3,109.3) scale(0.9996,1)" fill="#ececec"><text x="0" y="0" font-size="18.5">参数化</text></g>
<g transform="translate(311.2,109.3) scale(1.0135,1)" fill="#ececec"><text x="0" y="0" font-size="18.5">视图</text></g>
<g transform="translate(377.2,109.3) scale(1.0135,1)" fill="#ececec"><text x="0" y="0" font-size="18.5">管理</text></g>
<g transform="translate(443.2,109.3) scale(1.0135,1)" fill="#ececec"><text x="0" y="0" font-size="18.5">输出</text></g>
<g transform="translate(509.3,109.3) scale(0.9928,1)" fill="#ececec"><text x="0" y="0" font-size="18.5">附加模块</text></g>
<g transform="translate(613.0,109.3) scale(1.0849,1)" fill="#ececec" ><text x="0.0" y="0" font-size="17.76" textLength="41.5" lengthAdjust="spacingAndGlyphs">A360</text></g>
<g transform="translate(687.3,109.3) scale(0.9928,1)" fill="#ececec"><text x="0" y="0" font-size="18.5">精选应用</text></g>
<rect x="809" y="96.500" width="17" height="10" rx="2.500" fill="#eee"/><path d="M813.500 103.500h8l-4-4z" fill="#333"/>
<path d="M835 100h7l-3.5 4z" fill="#eee"/>
<g transform="translate(141.0,256.3)" fill="#f0f0f0"><text x="0" y="0" font-size="18.5">绘图</text></g>
<path d="M187.5 246.5h11l-5.5 6z" fill="#fff"/>
<g transform="translate(469.5,256.3)" fill="#f0f0f0"><text x="0" y="0" font-size="18.5">修改</text></g>
<path d="M515.5 246.5h11l-5.5 6z" fill="#fff"/>
<g transform="translate(756.5,256.3)" fill="#f0f0f0"><text x="0" y="0" font-size="18.5">注释</text></g>
<path d="M803 246.5h11l-5.5 6z" fill="#fff"/>
<g transform="translate(1062.5,256.3)" fill="#f0f0f0"><text x="0" y="0" font-size="18.5">图层</text></g>
<path d="M1109 246.5h11l-5.5 6z" fill="#fff"/>
<g transform="translate(1362.2,256.3)" fill="#f0f0f0"><text x="0" y="0" font-size="18.5">块</text></g>
<path d="M1390 246.5h11l-5.5 6z" fill="#fff"/>
<g transform="translate(1627.5,256.3)" fill="#f0f0f0"><text x="0" y="0" font-size="18.5">特性</text></g>
<path d="M1674 246.5h11l-5.5 6z" fill="#fff"/>
<g transform="translate(1880.2,256.3)" fill="#f0f0f0"><text x="0" y="0" font-size="18.5">组</text></g>
<path d="M1907.5 246.5h11l-5.5 6z" fill="#fff"/>
<g transform="translate(1960.0,256.3)" fill="#f0f0f0"><text x="0" y="0" font-size="18.5">实用工具</text></g>
<path d="M2042 246.5h11l-5.5 6z" fill="#fff"/>
<g transform="translate(2094.2,256.3)" fill="#f0f0f0"><text x="0" y="0" font-size="18.5">剪贴板</text></g>
<g transform="translate(2186.2,256.3)" fill="#f0f0f0"><text x="0" y="0" font-size="18.5">视图</text></g>
<path d="M2232 246.5h11l-5.5 6z" fill="#fff"/>
<path d="M1834.5 245l6 6M1841 246v5.500h-5.500" stroke="#f0f0f0" stroke-width="1.600" fill="none"/>
<path d="M2257 245l6 6M2263.5 246v5.500h-5.500" stroke="#f0f0f0" stroke-width="1.600" fill="none"/>
<path d="M25.200 168.700L62.900 130.900" stroke="#c9c9c9" stroke-width="2"/>
<rect x="22.45" y="165.95" width="5.5" height="5.5" fill="#4d7fcf" stroke="#8db5f2" stroke-width="1.2"/>
<rect x="60.15" y="128.15" width="5.5" height="5.5" fill="#4d7fcf" stroke="#8db5f2" stroke-width="1.2"/>
<path d="M85.400 162.900H114.500A12.800 12.800 0 0 0 114.500 137.300H109.300" stroke="#cfcfcf" stroke-width="2.200" fill="none"/>
<rect x="82.65" y="160.15" width="5.5" height="5.5" fill="#4d7fcf" stroke="#8db5f2" stroke-width="1.2"/>
<rect x="106.55" y="160.15" width="5.5" height="5.5" fill="#4d7fcf" stroke="#8db5f2" stroke-width="1.2"/>
<rect x="106.55" y="134.55" width="5.5" height="5.5" fill="#4d7fcf" stroke="#8db5f2" stroke-width="1.2"/>
<circle cx="164.700" cy="151" r="21.500" fill="#333" opacity=".5"/><circle cx="164.700" cy="149.300" r="21.300" fill="url(#gw)"/><path d="M164.700 149.300L180.200 134.100" stroke="#8db5f2" stroke-width="2"/>
<rect x="162" y="146.600" width="5.400" height="5.400" fill="#fff" stroke="#8db5f2" stroke-width="1.200"/>
<path d="M208.200 168.700C210 145 228 131 247.700 130" stroke="#cfcfcf" stroke-width="2.200" fill="none"/>
<rect x="205.45" y="165.95" width="5.5" height="5.5" fill="#4d7fcf" stroke="#8db5f2" stroke-width="1.2"/>
<rect x="217.85" y="140.35" width="5.5" height="5.5" fill="#4d7fcf" stroke="#8db5f2" stroke-width="1.2"/>
<rect x="244.95" y="127.25" width="5.5" height="5.5" fill="#4d7fcf" stroke="#8db5f2" stroke-width="1.2"/>
<g transform="translate(26.6,199.3)" fill="#fff"><text x="0" y="0" font-size="18.5">直线</text></g>
<g transform="translate(77.3,199.3)" fill="#fff"><text x="0" y="0" font-size="18.5">多段线</text></g>
<g transform="translate(155.4,199.3)" fill="#fff"><text x="0" y="0" font-size="18.5">圆</text></g>
<g transform="translate(208.8,199.3)" fill="#fff"><text x="0" y="0" font-size="18.5">圆弧</text></g>
<path d="M160.7 207.95h8l-4 4.5z" fill="#fff"/>
<path d="M222.6 207.95h8l-4 4.5z" fill="#fff"/>
<rect x="274" y="134" width="18" height="12.500" rx="1" fill="url(#gw)"/><rect x="269.500" y="144" width="4.500" height="4.500" fill="#4d7fcf" stroke="#8db5f2"/><rect x="289.500" y="131" width="4.500" height="4.500" fill="#4d7fcf" stroke="#8db5f2"/>
<ellipse cx="281" cy="176.500" rx="10.500" ry="7" fill="url(#gw)"/><circle cx="281" cy="176.500" r="1.800" fill="#444"/><rect x="279" y="166.500" width="4.500" height="4.500" fill="#4d7fcf" stroke="#8db5f2"/><rect x="289.500" y="172.500" width="4.500" height="4.500" fill="#4d7fcf" stroke="#8db5f2"/>
<rect x="274.500" y="204.500" width="14.500" height="14.500" fill="#9ebcf0" stroke="#4d7fcf" stroke-width="1.500"/><path d="M271 204.500h22M271 219h22M274.500 201v22M289 201v22" stroke="#d8d8d8" stroke-width="1.500"/><path d="M281 222l9-9M286 218h8M290 214v8" stroke="#5a8fe0" stroke-width="1.500"/>
<path d="M303.6 136.65h8l-4 4.5z" fill="#fff"/>
<path d="M303.6 172.45h8l-4 4.5z" fill="#fff"/>
<path d="M303.6 208.55h8l-4 4.5z" fill="#fff"/>
<g transform="translate(352,139.9)"><path d="M0-12l4.500 5h-3v5.500h5.500v-3l5 4.500-5 4.500v-3h-5.500v5.500h3l-4.500 5-4.500-5h3v-5.500h-5.500v3l-5-4.500 5-4.500v3h5.500v-5.500h-3z" fill="#d8d8d8"/><rect x="-3" y="-3" width="6" height="6" fill="#4d7fcf" stroke="#8db5f2"/></g>
<g transform="translate(352,176)"><circle cx="-6" cy="-6" r="5.500" fill="url(#gw)"/><circle cx="5" cy="6" r="6.500" fill="#8fb0e6" opacity=".8"/><circle cx="2" cy="4" r="6.500" fill="url(#gb)"/><path d="M2-8h7v5" stroke="#ddd" stroke-width="1.500" fill="none"/></g>
<g transform="translate(352,212)"><path d="M-11-11h14v22h-14z" fill="url(#gw)"/><path d="M3-11h4l5 22h-9z" fill="url(#gb)" stroke="#2a4a80" stroke-width=".8"/><path d="M-6 6h8v-3l5 4-5 4v-3h-8z" fill="#111"/></g>
<g transform="translate(439.3,141.5)"><circle r="9.500" fill="none" stroke="#c4c4c4" stroke-width="2.500"/><path d="M-3-13.500l7 3-7 4z" fill="#6c9ee2"/></g>
<g transform="translate(439.3,176)"><path d="M-2-9v18h-9z" fill="url(#gw)"/><path d="M2-9v18h9z" fill="url(#gb)"/><path d="M0-12v24" stroke="#bbb" stroke-width="1.500"/></g>
<g transform="translate(439.3,212)"><rect x="-11" y="-11" width="22" height="22" fill="url(#gb)" stroke="#2a4a80" stroke-width=".6"/><rect x="-11" y="-2" width="13" height="13" fill="url(#gw)" stroke="#555" stroke-width=".8"/></g>
<g transform="translate(528,139.9)"><path d="M-12 0h6M2 0h3M7 0h3" stroke="#bcbcbc" stroke-width="1.800"/><path d="M-6 9l8-18" stroke="#6c9ee2" stroke-width="2"/></g>
<g transform="translate(528,176)"><path d="M-9 11v-12a9 9 0 0 1 9-9h11v21z" fill="url(#gw)" stroke="#333" stroke-width="1"/><path d="M-11-2a11 11 0 0 1 9-10" fill="none" stroke="#6c9ee2" stroke-width="2.500"/></g>
<g transform="translate(528,212)"><rect x="-12" y="-11" width="9" height="9" fill="url(#gw)" stroke="#333" stroke-width="1"/><rect x="2" y="-12" width="10" height="10" fill="#8db5f2"/><rect x="-12" y="2" width="10" height="10" fill="#8db5f2"/><rect x="2" y="2" width="10" height="10" fill="#8db5f2"/></g>
<g transform="translate(640,139.9)"><path d="M12-11l-12 14-3-2 12-14z" fill="url(#gy)" stroke="#7a5a10" stroke-width=".6"/><path d="M-3 1l3 2-2 4c-3 2-6 1-6-1 0-3 2-5 5-5z" fill="#e05010"/><path d="M-11 11.500h23" stroke="#cfcfcf" stroke-width="1.500"/></g>
<g transform="translate(640,176)"><path d="M-11-3l7-6h15l-7 6zM-11-3h15v12h-15zM4-3l7-6v12l-7 6z" fill="url(#gb)" stroke="#dfe8f8" stroke-width=".8"/></g>
<g transform="translate(640,212)"><path d="M-10 9v-6h6v-8a4 4 0 0 1 8 0v8h6v6z" fill="none" stroke="#6c9ee2" stroke-width="4.500" stroke-linejoin="round"/><path d="M-10 9v-6h6v-8a4 4 0 0 1 8 0v8h6v6z" fill="none" stroke="#dfe8f8" stroke-width="1.300" stroke-linejoin="round"/></g>
<g transform="translate(370.3,147.2)" fill="#fff"><text x="0" y="0" font-size="18.5">移动</text></g>
<g transform="translate(370.3,183.3)" fill="#fff"><text x="0" y="0" font-size="18.5">复制</text></g>
<g transform="translate(370.3,219.3)" fill="#fff"><text x="0" y="0" font-size="18.5">拉伸</text></g>
<g transform="translate(458.3,147.2)" fill="#fff"><text x="0" y="0" font-size="18.5">旋转</text></g>
<g transform="translate(458.3,183.3)" fill="#fff"><text x="0" y="0" font-size="18.5">镜像</text></g>
<g transform="translate(458.3,219.3)" fill="#fff"><text x="0" y="0" font-size="18.5">缩放</text></g>
<g transform="translate(547.3,147.2)" fill="#fff"><text x="0" y="0" font-size="18.5">修剪</text></g>
<g transform="translate(547.3,183.3)" fill="#fff"><text x="0" y="0" font-size="18.5">圆角</text></g>
<g transform="translate(547.3,219.3)" fill="#fff"><text x="0" y="0" font-size="18.5">阵列</text></g>
<path d="M599.7 136.75h8l-4 4.5z" fill="#fff"/>
<path d="M599.7 172.75h8l-4 4.5z" fill="#fff"/>
<path d="M595.7 208.75h8l-4 4.5z" fill="#fff"/>
<text x="706.800" y="170.800" font-size="57" fill="url(#ga)" text-anchor="middle" textLength="37.500" lengthAdjust="spacingAndGlyphs">A</text>
<g transform="translate(688.3,199.3)" fill="#fff"><text x="0" y="0" font-size="18.5">文字</text></g>
<path d="M702.5 207.75h8l-4 4.5z" fill="#fff"/>
<g transform="translate(768.8,150)"><path d="M-20-21v40M20-21v40" stroke="#c4c4c4" stroke-width="1.500"/><path d="M-19-14h38" stroke="#6c9ee2" stroke-width="1.500"/><path d="M-19-14l6-3v6zM19-14l-6-3v6z" fill="#6c9ee2"/><g fill="#f09a10"><ellipse cx="0" cy="4.300" rx="2.300" ry="4.300"/><ellipse cx="-7" cy="7.500" rx="4.300" ry="2.300" transform="rotate(45,-7,7.500)"/><ellipse cx="7" cy="7.500" rx="4.300" ry="2.300" transform="rotate(-45,7,7.500)"/><ellipse cx="-10.300" cy="14.800" rx="4.300" ry="2.300" transform="rotate(12,-10.300,14.800)"/><ellipse cx="10.300" cy="14.800" rx="4.300" ry="2.300" transform="rotate(-12,10.300,14.800)"/></g><g fill="#ffd838"><ellipse cx="0" cy="5.300" rx="1.200" ry="2.500"/><ellipse cx="-6.300" cy="8.200" rx="2.500" ry="1.200" transform="rotate(45,-6.300,8.200)"/><ellipse cx="6.300" cy="8.200" rx="2.500" ry="1.200" transform="rotate(-45,6.300,8.200)"/><ellipse cx="-9.300" cy="15" rx="2.500" ry="1.200" transform="rotate(12,-9.300,15)"/><ellipse cx="9.300" cy="15" rx="2.500" ry="1.200" transform="rotate(-12,9.300,15)"/></g></g>
<g transform="translate(751.0,199.3)" fill="#fff"><text x="0" y="0" font-size="18.5">标注</text></g>
<g transform="translate(817.6,139.5)"><path d="M-11-11v22M11-11v22" stroke="#c8c8c8" stroke-width="1.500"/><path d="M-10-4h20" stroke="#6c9ee2" stroke-width="1.500"/><path d="M-10-4l5-3v6zM10-4l-5-3v6z" fill="#6c9ee2"/></g>
<g transform="translate(817.6,176)"><path d="M6-5.200H-1.500c-2 0-2.500 1-3.200 2.500L-9.500 8" stroke="#d0d0d0" stroke-width="1.800" fill="none"/><circle cx="7.100" cy="-5.200" r="3.600" fill="#ececec"/><path d="M-11.300 12l.3-7 4.500 2z" fill="#d8d8d8"/></g>
<g transform="translate(817.6,212.3)"><rect x="-11" y="-11" width="22" height="22" fill="#e8e8ec" stroke="#888" stroke-width="1"/><rect x="-11" y="-11" width="22" height="5" fill="#b8b8c0"/><path d="M-11-1h22M-11 5h22M-4-6v17M4-6v17" stroke="#999" stroke-width="1"/></g>
<g transform="translate(836.6,147.2)" fill="#fff"><text x="0" y="0" font-size="18.5">线性</text></g>
<g transform="translate(836.6,183.3)" fill="#fff"><text x="0" y="0" font-size="18.5">引线</text></g>
<g transform="translate(836.6,219.3)" fill="#fff"><text x="0" y="0" font-size="18.5">表格</text></g>
<path d="M885.8 137.25h8l-4 4.5z" fill="#fff"/>
<path d="M885.8 173.25h8l-4 4.5z" fill="#fff"/>
<g transform="translate(935.8,149)"><path d="M-21-13l9-8h20l-9 8zM-21-5l9-8h20l-9 8zM-21 3l9-8h20l-9 8z" fill="#f2f2f2" stroke="#2a2a2a" stroke-width="1"/><rect x="3" y="-3.500" width="18" height="25" rx="1.500" fill="#f0f0f4" stroke="#2a2a2a"/><rect x="6" y="-.500" width="8" height="8" fill="#4d7fcf"/><path d="M16 0v7" stroke="#99a" stroke-width="2"/><path d="M6 12h12M6 17h12" stroke="#556" stroke-width="1.300"/></g>
<g transform="translate(916.8,199.8)" fill="#fff"><text x="0" y="0" font-size="18.5">图层</text></g>
<g transform="translate(916.8,222.8)" fill="#fff"><text x="0" y="0" font-size="18.5">特性</text></g>
<rect x="964.500" y="123.500" width="311" height="31.500" fill="#626262" stroke="#2e2e2e" stroke-width="1.500"/><rect x="966" y="125" width="308" height="14" fill="#6c6c6c" opacity=".6"/>
<g transform="translate(981.7,139)"><path d="M0-11a6.500 6.500 0 0 1 4 11.500v3h-8v-3a6.500 6.500 0 0 1 4-11.500z" fill="#ffe27a" stroke="#8a6a10" stroke-width=".6"/><rect x="-3" y="5" width="6" height="4" fill="#bbb"/></g>
<g transform="translate(1008.8,139)"><circle r="5.500" fill="#ffd84a"/><circle r="3" fill="#fff6c8"/><path d="M0-11v22M-11 0h22M-8-8l16 16M8-8l-16 16" stroke="#e8e0c0" stroke-width="1.200"/></g>
<g transform="translate(1037.6,141)"><rect x="-9" y="-2" width="14" height="10" fill="#f0c838" stroke="#6a5010" stroke-width=".8"/><path d="M2-2v-5a4.500 4.500 0 0 1 9 0v2" fill="none" stroke="#e8e8e8" stroke-width="2"/><rect x="-3" y="1" width="2" height="4" fill="#333"/></g>
<rect x="1058.200" y="130.500" width="21" height="20.500" fill="#fff" stroke="#111" stroke-width="1.200"/>
<text x="1085.500" y="146.500" font-size="20" fill="#fff">0</text>
<path d="M1261.9 137.5h11l-5.5 6z" fill="#fff"/>
<g transform="translate(983.4,177)"><path d="M-12 -2l6-5h14l-6 5z" fill="#f0f0f0" stroke="#2a2a2a" stroke-width=".9"/><path d="M6-2a4.500 4.500 0 0 1 2.500 8v3.500h-5v-3.500a4.500 4.500 0 0 1 2.500-8z" fill="#a8c8fa" stroke="#dde8fa" stroke-width=".6"/></g>
<g transform="translate(1017.8,177)"><path d="M-12 -4l6-5h14l-6 5z" fill="#f0f0f0" stroke="#2a2a2a" stroke-width=".9"/><path d="M-12 1l6-5h14l-6 5z" fill="#f0f0f0" stroke="#2a2a2a" stroke-width=".9"/><path d="M-12 6l6-5h14l-6 5z" fill="#4d7fcf" stroke="#2a2a2a" stroke-width=".9"/><path d="M10 4l-6 6M4 10v-4.500M4 10h4.500" stroke="#aaa" stroke-width="1.400" fill="none"/></g>
<g transform="translate(1054,177)"><path d="M-12 -2l6-5h14l-6 5z" fill="#f0f0f0" stroke="#2a2a2a" stroke-width=".9"/><circle cx="6" cy="4" r="6" fill="#3a6ed0"/><path d="M6-1.500v11M1.200 1.200l9.600 5.600M10.800 1.200l-9.600 5.600" stroke="#e8f0ff" stroke-width="1.300"/></g>
<g transform="translate(1091.7,177)"><path d="M-12 -2l6-5h14l-6 5z" fill="#f0f0f0" stroke="#2a2a2a" stroke-width=".9"/><rect x="2" y="3" width="9" height="7.500" fill="#7fb8b0" stroke="#3a6a64" stroke-width=".6"/><path d="M4 3v-2.500a2.500 2.500 0 0 1 5 0v2.500" fill="none" stroke="#8cc" stroke-width="1.400"/></g>
<g transform="translate(1124.5,177)"><path d="M-12 -4l6-5h14l-6 5z" fill="#4d7fcf" stroke="#2a2a2a" stroke-width=".9"/><path d="M-12 1l6-5h14l-6 5z" fill="#f0f0f0" stroke="#2a2a2a" stroke-width=".9"/><path d="M-12 6l6-5h14l-6 5z" fill="#f0f0f0" stroke="#2a2a2a" stroke-width=".9"/><circle cx="0" cy="-11" r="3" fill="#e8e8e8"/></g>
<g transform="translate(983.4,212)"><path d="M-12 -4l6-5h14l-6 5z" fill="#f0f0f0" stroke="#2a2a2a" stroke-width=".9"/><path d="M-12 1l6-5h14l-6 5z" fill="#f0f0f0" stroke="#2a2a2a" stroke-width=".9"/><path d="M-12 6l6-5h14l-6 5z" fill="#f0f0f0" stroke="#2a2a2a" stroke-width=".9"/><path d="M6-1a4.500 4.500 0 0 1 2.500 8v3.500h-5v-3.500a4.500 4.500 0 0 1 2.500-8z" fill="#ffb020" stroke="#ffe090" stroke-width=".6"/></g>
<g transform="translate(1017.8,212)"><path d="M-12 -4l6-5h14l-6 5z" fill="#f0f0f0" stroke="#2a2a2a" stroke-width=".9"/><path d="M-12 1l6-5h14l-6 5z" fill="#f0f0f0" stroke="#2a2a2a" stroke-width=".9"/><path d="M-12 6l6-5h14l-6 5z" fill="#4d7fcf" stroke="#2a2a2a" stroke-width=".9"/><path d="M4 10l6-6M10 4v4.500M10 4h-4.500" stroke="#aaa" stroke-width="1.400" fill="none"/></g>
<g transform="translate(1054,212)"><path d="M-12 -4l6-5h14l-6 5z" fill="#f0f0f0" stroke="#2a2a2a" stroke-width=".9"/><path d="M-12 1l6-5h14l-6 5z" fill="#f0f0f0" stroke="#2a2a2a" stroke-width=".9"/><path d="M-12 6l6-5h14l-6 5z" fill="#f0f0f0" stroke="#2a2a2a" stroke-width=".9"/><path d="M6-3v15M-1.500 4.500h15M.7-.8l10.600 10.600M11.300-.8l-10.600 10.600" stroke="#ffd840" stroke-width="1.200"/><circle cx="6" cy="4.500" r="4.300" fill="#ffc400"/></g>
<g transform="translate(1091.7,212)"><path d="M-12 -2l6-5h14l-6 5z" fill="#f0f0f0" stroke="#2a2a2a" stroke-width=".9"/><rect x="0" y="5" width="10" height="6.500" fill="#f0c020" stroke="#7a5a00" stroke-width=".6"/><path d="M7 5v-2.500a2.500 2.500 0 0 1 5 0" fill="none" stroke="#f0c020" stroke-width="1.400"/></g>
<g transform="translate(1124.5,212)"><path d="M-12 -4l6-5h14l-6 5z" fill="#f0f0f0" stroke="#2a2a2a" stroke-width=".9"/><path d="M-12 1l6-5h14l-6 5z" fill="#f0f0f0" stroke="#2a2a2a" stroke-width=".9"/><path d="M-12 6l6-5h14l-6 5z" fill="#f0f0f0" stroke="#2a2a2a" stroke-width=".9"/><path d="M1 5l8 5 3-5-2-2z" fill="#c86a10"/><path d="M10 3l3-4" stroke="#ddd" stroke-width="1.200"/></g>
<g transform="translate(1144.5,183.3)" fill="#fff"><text x="0" y="0" font-size="18.5">置为当前</text></g>
<g transform="translate(1144.5,219.3)" fill="#fff"><text x="0" y="0" font-size="18.5">匹配图层</text></g>
<g transform="translate(1312.5,149)"><path d="M-6-20h14l8 8v20h-22z" fill="#b9d2f4" stroke="#dfe8f8" stroke-width="1"/><rect x="-21" y="-9" width="27" height="20" rx="1" fill="url(#gw)" stroke="#555" stroke-width=".8"/><circle cx="8" cy="10" r="10" fill="url(#gw)" stroke="#666" stroke-width=".8"/><path d="M8 0v10h10" stroke="#888" fill="none"/><rect x="-24" y="8" width="5" height="5" fill="#4d7fcf" stroke="#8db5f2"/></g>
<g transform="translate(1294.2,198.3)" fill="#fff"><text x="0" y="0" font-size="18.5">插入</text></g>
<path d="M1308.7 206.25h8l-4 4.5z" fill="#fff"/>
<g transform="translate(1359,139.9)"><rect x="-7" y="-8" width="12" height="10" fill="url(#gw)"/><circle cx="5" cy="4" r="6" fill="#d8d8dc"/><rect x="-11" y="1" width="5" height="5" fill="#4d7fcf" stroke="#8db5f2"/></g>
<g transform="translate(1359,176)"><rect x="-7" y="-6" width="12" height="10" fill="url(#gw)"/><circle cx="4" cy="6" r="5" fill="#d8d8dc"/><rect x="-11" y="3" width="5" height="5" fill="#4d7fcf" stroke="#8db5f2"/><path d="M7-12l-4 7h3l-2 6 6-8h-3z" fill="#ffb820"/></g>
<g transform="translate(1359,212)"><path d="M-10-7l7 13 4-6" stroke="#ddd" stroke-width="2.500" fill="none"/><path d="M-5 2l5 7 9-14" stroke="#bbb" stroke-width="2" fill="none"/><path d="M9-8l-7 9-1 4 4-2 7-9z" fill="#f0a020"/></g>
<g transform="translate(1378.3,147.2)" fill="#fff"><text x="0" y="0" font-size="18.5">创建</text></g>
<g transform="translate(1378.3,183.3)" fill="#fff"><text x="0" y="0" font-size="18.5">编辑</text></g>
<g transform="translate(1378.3,219.3)" fill="#fff"><text x="0" y="0" font-size="18.5">编辑属性</text></g>
<path d="M1463.6 209.25h8l-4 4.5z" fill="#fff"/>
<g transform="translate(1514,150)"><rect x="-22" y="-21" width="30" height="40" rx="1" fill="#eef0f6" stroke="#999"/><rect x="-18" y="-18" width="16" height="14" fill="#4472c4"/><path d="M-17 2h14M-17 7h18M-12-1v6" stroke="#667" stroke-width="1.500"/><path d="M-2 12l10-4 12-10 3 4-12 10-5 6z" fill="#c86818"/><path d="M18-2l5-3 2 3-4 4z" fill="#e8e8e8"/></g>
<g transform="translate(1496.4,199.8)" fill="#fff"><text x="0" y="0" font-size="18.5">特性</text></g>
<g transform="translate(1496.4,222.8)" fill="#fff"><text x="0" y="0" font-size="18.5">匹配</text></g>
<g transform="translate(1559,139.5)"><circle r="10.500" fill="#d8d8d8"/><path d="M0 0L0-10A10 10 0 0 1 8.660-5z" fill="#e8e020"/><path d="M0 0L8.660-5A10 10 0 0 1 8.660 5z" fill="#e03030"/><path d="M0 0L8.660 5A10 10 0 0 1 0 10z" fill="#c030c0"/><path d="M0 0L0 10A10 10 0 0 1-8.660 5z" fill="#3040e0"/><path d="M0 0L-8.660 5A10 10 0 0 1-8.660-5z" fill="#20c0d0"/><path d="M0 0L-8.660-5A10 10 0 0 1 0-10z" fill="#30c040"/></g>
<g transform="translate(1559,175)"><path d="M-12-12h24" stroke="#ddd" stroke-width="1.500"/><path d="M-12-7h24" stroke="#ddd" stroke-width="2.500"/><path d="M-12-.500h24" stroke="#ddd" stroke-width="4"/><path d="M-12 7.500h24" stroke="#ddd" stroke-width="5.500"/></g>
<g transform="translate(1559,211)"><path d="M-11-8h22" stroke="#ccc" stroke-width="1.500" stroke-dasharray="2 1.500"/><path d="M-11-2h22" stroke="#ccc" stroke-width="1.500"/><path d="M-11 4h22" stroke="#ccc" stroke-width="1.500" stroke-dasharray="5 3"/><path d="M-11 10h22" stroke="#ccc" stroke-width="1.500" stroke-dasharray="7 2 2 2"/></g>
<rect x="1574.500" y="123.6" width="269" height="31.6" fill="#636363" stroke="#2e2e2e" stroke-width="1.500"/><rect x="1576" y="125.1" width="266" height="13" fill="#707070" opacity=".55"/>
<path d="M1828.8 136.9h11l-5.5 6z" fill="#fff"/>
<rect x="1574.500" y="159" width="269" height="31.5" fill="#636363" stroke="#2e2e2e" stroke-width="1.500"/><rect x="1576" y="160.5" width="266" height="13" fill="#707070" opacity=".55"/>
<path d="M1828.8 172.25h11l-5.5 6z" fill="#fff"/>
<rect x="1574.500" y="195" width="269" height="31.500" fill="#636363" stroke="#2e2e2e" stroke-width="1.500"/><rect x="1576" y="196.5" width="266" height="13" fill="#707070" opacity=".55"/>
<path d="M1828.8 208.25h11l-5.5 6z" fill="#fff"/>
<rect x="1594" y="129.500" width="24" height="23" fill="#fff" stroke="#444" stroke-width="1"/>
<text x="1633.300" y="147.500" font-size="20" fill="#fff" textLength="66.500" lengthAdjust="spacingAndGlyphs">ByLayer</text>
<path d="M1587.400 174.200H1675" stroke="#fff" stroke-width="5.500"/><text x="1679.300" y="181.500" font-size="20" fill="#fff" textLength="66.500" lengthAdjust="spacingAndGlyphs">ByLayer</text>
<path d="M1580 210.500H1675" stroke="#eee" stroke-width="1.200"/><text x="1679.300" y="217.500" font-size="20" fill="#fff" textLength="66.500" lengthAdjust="spacingAndGlyphs">ByLayer</text>
<g transform="translate(1880,150)"><rect x="-22" y="-21" width="28" height="44" fill="none" stroke="#bbb" stroke-width="1" stroke-dasharray="2 1.500"/><rect x="-18" y="-16" width="17" height="14" rx="1" fill="#e8d870" stroke="#776"/><circle cx="-10" cy="11" r="7.500" fill="url(#gw)" stroke="#777"/><path d="M7-12l3-11 3 11 11 3-11 3-3 11-3-11-11-3z" fill="#fff"/><path d="M0-20l20 20M20-20l-20 20" stroke="#dff" stroke-width="1.300"/><circle cx="10" cy="-9" r="5" fill="#cfe6ff"/></g>
<g transform="translate(1872.7,199.1)" fill="#fff"><text x="0" y="0" font-size="18.5">组</text></g>
<g transform="translate(1928.6,139.9)"><rect x="-11" y="-12" width="16" height="24" fill="none" stroke="#999" stroke-dasharray="2 1.500"/><rect x="-8" y="-9" width="8" height="7" fill="#e8d870"/><circle cx="-4" cy="6" r="3.500" fill="#e8e8e8"/><path d="M12-12l-8 10-2-2 8-10z" fill="#f0b030"/><circle cx="2" cy="-1" r="2" fill="#c03020"/></g>
<g transform="translate(1928.6,176)"><rect x="-11" y="-12" width="14" height="24" fill="none" stroke="#999" stroke-dasharray="2 1.500"/><rect x="-7" y="-8" width="6" height="6" fill="#ddd"/><circle cx="-4" cy="5" r="3" fill="#4d7fcf"/><path d="M6-6h8M10-10v8M6 4h8" stroke="#bbb" stroke-width="1.500"/></g>
<rect x="1910.500" y="195.500" width="34" height="31" fill="#5f84c6" stroke="#2a4478" stroke-width="1.500"/>
<g transform="translate(1928.6,211)"><rect x="-9" y="-8" width="7" height="7" fill="#e8d870"/><rect x="-9" y="3" width="7" height="7" fill="#e8e8e8"/><path d="M2-7l9 9h-5l2 6-2.500 1-2.500-6-3 3z" fill="#ffe070" stroke="#443" stroke-width=".8"/><path d="M-10 12h12" stroke="#345" stroke-dasharray="1.500 1.500"/></g>
<g transform="translate(1987.7,152)"><path d="M-21-14v12M21-14v12" stroke="#ddd" stroke-width="1.500"/><path d="M-20-8h40" stroke="#ddd" stroke-width="1.300"/><path d="M-20-8l6-3v6zM20-8l-6-3v6z" fill="#ddd"/><rect x="-22" y="3" width="44" height="8" fill="url(#gy)" stroke="#a07808" stroke-width=".6"/><path d="M-18 3v3M-14 3v3M-10 3v3M-6 3v3M-2 3v3M2 3v3M6 3v3M10 3v3M14 3v3M18 3v3" stroke="#8a6808" stroke-width=".8"/></g>
<g transform="translate(1969.4,199.1)" fill="#fff"><text x="0" y="0" font-size="18.5">测量</text></g>
<path d="M1983.6 207.75h8l-4 4.5z" fill="#fff"/>
<g transform="translate(2041.8,139.9)"><path d="M-9-5h14M-2-12v14" stroke="#ddd" stroke-width="1.500"/><rect x="-5" y="-8" width="6" height="6" fill="none" stroke="#ddd"/><path d="M9-12l-4 6h3l-2 5 6-7h-3z" fill="#ffa820"/><rect x="1" y="2" width="9" height="10" fill="#e8e8e8" stroke="#555" stroke-width=".6"/></g>
<g transform="translate(2041.8,176)"><path d="M-11 0h22M0-11v22" stroke="#ccc" stroke-width="1.300"/><rect x="-3" y="-3" width="6" height="6" fill="none" stroke="#ccc"/></g>
<g transform="translate(2041.8,212)"><rect x="-7" y="-10" width="14" height="20" rx="1.500" fill="#e8e8ec" stroke="#444"/><rect x="-5" y="-8" width="10" height="4" fill="#888"/><path d="M-4 0h8M-4 3h8M-4 6h8" stroke="#555" stroke-width="1.500" stroke-dasharray="2 1"/></g>
<g transform="translate(2103,150)"><rect x="-18" y="-17" width="30" height="36" rx="2" fill="#a89888" stroke="#544"/><rect x="-9" y="-21" width="12" height="7" rx="2" fill="#ddd" stroke="#555"/><rect x="-14" y="-13" width="22" height="28" fill="#c8beb4"/><path d="M-5-6h14l8 8v20h-22z" fill="url(#gw)" stroke="#555" stroke-width=".8"/></g>
<g transform="translate(2083.3,199.1)" fill="#fff"><text x="0" y="0" font-size="18.5">粘贴</text></g>
<path d="M2097.8 207.75h8l-4 4.5z" fill="#fff"/>
<g transform="translate(2156,139.9)"><path d="M-9-10l14 16M9-10l-14 16" stroke="#ddd" stroke-width="2.200"/><circle cx="-6" cy="8" r="3" fill="none" stroke="#333" stroke-width="1.500"/><circle cx="6" cy="8" r="3" fill="none" stroke="#333" stroke-width="1.500"/></g>
<g transform="translate(2156,176)"><path d="M-10-10h9l4 4v12h-13z" fill="#d8d8dc" stroke="#555" stroke-width=".8"/><path d="M-4-5h9l5 5v14h-14z" fill="url(#gw)" stroke="#555" stroke-width=".8"/></g>
<g transform="translate(2225.8,151)"><path d="M-18-13h14v6h23v20h-37z" fill="url(#gw)" stroke="#333" stroke-width=".8"/></g>
<g transform="translate(2206.5,199.1)" fill="#fff"><text x="0" y="0" font-size="18.5">基点</text></g>
<path d="M2221 208.75h8l-4 4.5z" fill="#fff"/>
<path d="M22 302c22 0 22-32 34-32h152c12 0 12 32 34 32z" fill="url(#gt1)" stroke="#505050"/>
<path d="M206 302c22 0 22-32 34-32h156c12 0 12 32 34 32z" fill="url(#gt2)" stroke="#6a6a6a"/>
<path d="M422 276c6 22 12 22 30 22 0-14-4-22-14-22z" fill="#555" stroke="#666"/>
<g transform="translate(55.9,293.4)" fill="#b4b4b4"><text x="0" y="0" font-size="19">开始</text></g>
<text x="243" y="293.500" font-size="20" fill="#fff" textLength="39" lengthAdjust="spacingAndGlyphs">123*</text>
<path d="M381 281.500l10 10M391 281.500l-10 10" stroke="#4a4a4a" stroke-width="2.500"/>
<path d="M431 287.500h12M437 281.500v12" stroke="#e0e0e0" stroke-width="2.800"/>
<path d="M180 1313c8 0 7 26 17 26h46c10 0 9-26 17-26z" fill="url(#gl2)" stroke="#6a6a6a"/>
<path d="M99 1313c8 0 7 26 17 26h46c10 0 9-26 17-26z" fill="url(#gl2)" stroke="#6a6a6a"/>
<path d="M24 1313c8 0 7 26 17 26h42c10 0 9-26 17-26z" fill="url(#gl1)" stroke="#7a7a7a"/>
<path d="M267 1337c10-4 9-19 18-22h15c0 14-7 22-19 22z" fill="#505050" stroke="#636363"/>
<g transform="translate(43.3,1333.8)" fill="#fff"><text x="0" y="0" font-size="18.5" font-weight="bold">模型</text></g>
<g transform="translate(113.0,1333.8)" fill="#b8b8b8"><text x="0" y="0" font-size="18.5" textLength="46.9" lengthAdjust="spacingAndGlyphs">布局1</text></g>
<g transform="translate(195.9,1333.8)" fill="#b8b8b8"><text x="0" y="0" font-size="18.5" textLength="46.9" lengthAdjust="spacingAndGlyphs">布局2</text></g>
<path d="M278 1326h12M284 1320v12" stroke="#d8d8d8" stroke-width="2.500"/>
<rect x="554.5" y="1315.500" width="315" height="37" fill="#515151" stroke="#767676" stroke-width="1"/>
<text x="602.500" y="1341" font-size="19.500" fill="#fff" textLength="260" lengthAdjust="spacingAndGlyphs">112367.7496, 33288.4471, 0.0000</text>
<rect x="875.5" y="1315.500" width="42" height="37" fill="#515151" stroke="#767676" stroke-width="1"/>
<g transform="translate(880.6,1340.6)" fill="#fff"><text x="0" y="0" font-size="18" font-weight="bold">模型</text></g>
<rect x="922.5" y="1315.500" width="95" height="37" fill="#515151" stroke="#767676" stroke-width="1"/>
<g transform="translate(940.7,1334)"><path d="M-7-10v20M-3-10v20M1-10v20M5-10v20M-10-6h18M-10-1h18M-10 4h18" stroke="#c4c4c4" stroke-width="1.200"/></g>
<g transform="translate(976,1334)"><path d="M-9-9h20M-9-4.500h20M-9 0h20M-9 4.500h20M-9 9h20" stroke="#bcbcbc" stroke-width="1.500" stroke-dasharray="1.500 2.500"/></g>
<path d="M1001.2 1331.25h10l-5 5.5z" fill="#fff"/>
<rect x="1022.5" y="1315.500" width="229" height="37" fill="#515151" stroke="#767676" stroke-width="1"/>
<path d="M1060.5 1316v36" stroke="#6a6a6a" stroke-width="1"/>
<path d="M1098.5 1316v36" stroke="#6a6a6a" stroke-width="1"/>
<g transform="translate(1041.5,1334)"><path d="M-1 8v-18h8v7h-8" fill="none" stroke="#d0d0d0" stroke-width="2"/><rect x="-7" y="4" width="7" height="7" fill="#d0d0d0"/></g>
<g transform="translate(1079.5,1334)"><path d="M-12-7h10M-7-12v10" stroke="#3d8bff" stroke-width="2"/><rect x="-3" y="2" width="15" height="6" rx="2.500" fill="#3d8bff"/></g>
<g transform="translate(1117,1334)"><path d="M-8-8v17h17M-8 2h6v7" fill="none" stroke="#c8c8c8" stroke-width="1.800"/></g>
<g transform="translate(1152.4,1334)"><circle r="8.500" fill="none" stroke="#c0c0c0" stroke-width="1.800"/><path d="M0 0h12M0 0l9-9" stroke="#c0c0c0" stroke-width="1.800"/></g>
<path d="M1177 1331.25h10l-5 5.5z" fill="#fff"/>
<g transform="translate(1211.2,1334)"><path d="M-11-11l21 24M1-12v24" stroke="#aaa" stroke-width="1.800"/></g>
<path d="M1234.8 1331.25h10l-5 5.5z" fill="#fff"/>
<rect x="1253.5" y="1315.500" width="268" height="37" fill="#515151" stroke="#767676" stroke-width="1"/>
<path d="M1347.5 1316v36" stroke="#6a6a6a" stroke-width="1"/>
<path d="M1385.5 1316v36" stroke="#6a6a6a" stroke-width="1"/>
<path d="M1423.5 1316v36" stroke="#6a6a6a" stroke-width="1"/>
<path d="M1461.5 1316v36" stroke="#6a6a6a" stroke-width="1"/>
<g transform="translate(1270,1334)"><path d="M-12 10h24M-12 10l20-18" stroke="#3d8bff" stroke-width="2.200" fill="none"/><circle cx="-1" cy="1" r="2.500" fill="#3d8bff"/></g>
<g transform="translate(1308.7,1334)"><rect x="-9" y="-7" width="19" height="17" fill="none" stroke="#3d8bff" stroke-width="2"/><rect x="-12" y="-11" width="7" height="7" fill="#111"/><rect x="-10.500" y="-9.500" width="4" height="4" fill="#20d020"/></g>
<path d="M1331.2 1331.25h10l-5 5.5z" fill="#fff"/>
<g transform="translate(1366.5,1334)"><path d="M-12-8h24" stroke="#c8c8c8" stroke-width="2"/><path d="M-12-2h24" stroke="#c8c8c8" stroke-width="3.500"/><rect x="-12" y="3" width="14" height="6" fill="#c8c8c8"/><path d="M2 6h10" stroke="#c8c8c8" stroke-width="1.500"/></g>
<pattern id="chk" x="0" y="0" width="4" height="4" patternUnits="userSpaceOnUse"><rect width="2" height="2" fill="#d0d0d0"/><rect x="2" y="2" width="2" height="2" fill="#d0d0d0"/></pattern>
<rect x="1394.500" y="1324" width="20" height="20" fill="#666"/><rect x="1394.500" y="1324" width="20" height="20" fill="url(#chk)"/>
<g transform="translate(1442.4,1334)"><path d="M-12-7h9M-7.500-12v10" stroke="#3d8bff" stroke-width="2"/><rect x="-6" y="-4" width="14" height="13" fill="none" stroke="#3d8bff" stroke-width="1.500"/><rect x="-1" y="0" width="12" height="12" fill="#8cc070"/></g>
<g transform="translate(1480,1334)"><path d="M-10-6l10-5 10 5v11l-10 6-10-6zM-10-6l10 5 10-5M0-1v12" fill="none" stroke="#3d8bff" stroke-width="2"/><rect x="-13" y="-12" width="7" height="7" fill="#111"/><rect x="-11.500" y="-10.500" width="4" height="4" fill="#20d020"/></g>
<path d="M1505.3 1331.25h10l-5 5.5z" fill="#fff"/>
<rect x="1526.5" y="1315.500" width="153" height="37" fill="#515151" stroke="#767676" stroke-width="1"/>
<g transform="translate(1543.9,1334)"><path d="M-10-11v21h21M-10 10l14-14" fill="none" stroke="#3d8bff" stroke-width="2"/><path d="M-13-8l3-4 3 4M8 7l4 3-4 3" fill="none" stroke="#3d8bff" stroke-width="1.800"/><path d="M6-12l-5 7h4l-3 6 7-8h-4z" fill="#3d8bff"/></g>
<g transform="translate(1580.9,1334)"><path d="M-10-5l10-5 10 5v11l-10 5-10-5zM-10-5l10 5 10-5M0 0v11" fill="none" stroke="#a8a8a8" stroke-width="1.600"/></g>
<path d="M1605 1331.25h10l-5 5.5z" fill="#fff"/>
<g transform="translate(1638,1334)"><path d="M-9-3l9-8 9 8v10l-9 6-9-6zM0-11v13M0 2l-9 5M0 2l9 5" fill="none" stroke="#b0b0b0" stroke-width="1.300"/><circle cx="-9" cy="7" r="2" fill="#30c040"/><circle cx="9" cy="7" r="2" fill="#e03030"/><circle cx="0" cy="2" r="2" fill="#e8e8e8"/></g>
<path d="M1663.2 1331.25h10l-5 5.5z" fill="#fff"/>
<rect x="1683.5" y="1315.500" width="216" height="37" fill="#515151" stroke="#767676" stroke-width="1"/>
<g transform="translate(1706.7,1334)"><path d="M0-3l-11 14 4 1 7-8 7 8 4-1zM0-12l3 9h-6z" fill="#3d8bff"/><circle cx="7" cy="-7" r="3.500" fill="none" stroke="#3d8bff" stroke-width="1.800"/></g>
<g transform="translate(1739.6,1334)"><path d="M0-3l-11 14 4 1 7-8 7 8 4-1zM0-12l3 9h-6z" fill="#aaa"/><path d="M9-12l-4 6h3l-2 5 6-7h-3z" fill="#c8c8c8"/></g>
<g transform="translate(1774.5,1334)"><path d="M0-3l-11 14 4 1 7-8 7 8 4-1zM0-12l3 9h-6z" fill="#aaa"/></g>
<text x="1800.700" y="1341" font-size="19.500" fill="#fff" textLength="76.500" lengthAdjust="spacingAndGlyphs">1:1 / 100%</text>
<path d="M1883.7 1331.25h10l-5 5.5z" fill="#fff"/>
<rect x="1905.5" y="1315.500" width="155" height="37" fill="#515151" stroke="#767676" stroke-width="1"/>
<g transform="translate(1922.6,1334)"><circle r="6" fill="none" stroke="#c0c0c0" stroke-width="4.500"/><circle r="9.500" fill="none" stroke="#c0c0c0" stroke-width="3" stroke-dasharray="3.700 3.760"/></g>
<g transform="translate(1948.7,1340.6) scale(1.0050,1)" fill="#fff"><text x="0" y="0" font-size="18" font-weight="bold">草图与注释</text></g>
<path d="M2044.8 1331.25h10l-5 5.5z" fill="#fff"/>
<rect x="2063" y="1315.500" width="36.5" height="37" fill="#515151" stroke="#767676" stroke-width="1"/>
<path d="M2070 1334.500h22M2081 1323.500v22" stroke="#e0e0e0" stroke-width="2.200"/>
<rect x="2104.5" y="1315.500" width="145" height="37" fill="#515151" stroke="#767676" stroke-width="1"/>
<g transform="translate(2123.6,1334)"><rect x="-3" y="-11" width="6" height="22" fill="#c0c0c0"/><path d="M-3-7h3M-3-3h3M-3 1h3M-3 5h3" stroke="#555"/></g>
<g transform="translate(2148.4,1340.6)" fill="#fff"><text x="0" y="0" font-size="18" font-weight="bold">小数</text></g>
<path d="M2234.8 1331.25h10l-5 5.5z" fill="#fff"/>
<rect x="2254" y="1315.500" width="34.5" height="37" fill="#515151" stroke="#767676" stroke-width="1"/>
<g transform="translate(2270.7,1334)"><rect x="-5.500" y="-7" width="11" height="14" rx="1" fill="none" stroke="#b8b8b8" stroke-width="1.500"/><path d="M-3-3h6M-3 0h6M-3 3h6" stroke="#b8b8b8" stroke-width="1.500" stroke-dasharray="1.500 .8"/></g>
<rect x="2294.5" y="1315.500" width="97" height="37" fill="#515151" stroke="#767676" stroke-width="1"/>
<path d="M2354.5 1316v36" stroke="#6a6a6a" stroke-width="1"/>
<g transform="translate(2312.6,1334)"><rect x="-11" y="-10" width="17" height="13" fill="none" stroke="#c8c8c8" stroke-width="1.800"/><path d="M-11-7h17" stroke="#c8c8c8" stroke-width="2.500"/><rect x="0" y="2" width="9" height="8" fill="#d0d0d0"/><path d="M6 2v-3a2.800 2.800 0 0 1 5.600 0" fill="none" stroke="#d0d0d0" stroke-width="1.600"/></g>
<path d="M2336.8 1331.25h10l-5 5.5z" fill="#fff"/>
<g transform="translate(2372.4,1334)"><rect x="-10" y="-11" width="8" height="8" fill="none" stroke="#b8b8b8" stroke-width="1.600"/><circle cx="6" cy="-3" r="4.500" fill="none" stroke="#b8b8b8" stroke-width="1.600"/><path d="M-7 9l5-8 5 8z" fill="none" stroke="#b8b8b8" stroke-width="1.600"/></g>
<rect x="2397" y="1315.500" width="72.5" height="37" fill="#515151" stroke="#767676" stroke-width="1"/>
<path d="M2435.5 1316v36" stroke="#6a6a6a" stroke-width="1"/>
<g transform="translate(2415,1334)"><circle r="11" fill="#1a4a90" stroke="#3d8bff" stroke-width="2.500"/><path d="M-2 3l8-7" stroke="#3d8bff" stroke-width="2"/></g>
<g transform="translate(2453.6,1334)"><path d="M-8-9h9l5 5v14h-14z" fill="#e8e8f0" stroke="#48f"/><rect x="-11" y="1" width="14" height="9" fill="#f0d040"/><path d="M0 6l4 4 8-8" stroke="#30b030" stroke-width="2.500" fill="none"/><path d="M-10-8l5 3" stroke="#6ae" stroke-width="2"/></g>
<rect x="2472.5" y="1315.500" width="71" height="37" fill="#515151" stroke="#767676" stroke-width="1"/>
<g transform="translate(2490.5,1334)"><rect x="-11" y="-8" width="22" height="16" fill="none" stroke="#d0d0d0" stroke-width="1.800"/><path d="M-7 5l5-5M-7 5v-4M-7 5h4M7-5l-5 5M7-5v4M7-5h-4" stroke="#d0d0d0" stroke-width="1.600" fill="none"/></g>
<path d="M2516 1326.500h23M2516 1334.500h23M2516 1342.500h23" stroke="#e0e0e0" stroke-width="2.500"/>
<path d="M530.500 1279v26" stroke="#999" stroke-width="1.500" stroke-dasharray="1.500 2"/>
<path d="M542 1286l12 11M554 1286l-12 11" stroke="#e8e8e8" stroke-width="2.800"/>
<g transform="translate(582,1292)"><path d="M-9-8a5.500 5.500 0 0 1 7 6l11 10-3 3-11-10a5.500 5.500 0 0 1-7-6l4 3 3-3z" fill="#e8e8e8"/></g>
<rect x="607.500" y="1282.500" width="21" height="20" rx="2" fill="#8c8e96" stroke="#70727a"/><path d="M612 1288l6 4.500-6 4.500M620 1298h6" stroke="#4a4c54" stroke-width="1.800" fill="none"/>
<path d="M634.5 1290.75h8l-4 4.5z" fill="#555"/>
<g transform="translate(656.2,1298.8) scale(1.0077,1) skewX(-12)" fill="#858585"><text x="0" y="0" font-size="20">键入命令</text></g>
<path d="M2020 1297h11l-5.500-6z" fill="#111"/>
<path d="M36 1406a8 8 0 0 1 2-15 11 11 0 0 1 21 2 7 7 0 0 1 0 13z" fill="#a8c8f4" stroke="#88a8e0" stroke-width="1"/><path d="M38 1404a6 6 0 0 1 2-10 9 9 0 0 1 16 1" fill="#d8e8fc" opacity=".8"/>
<circle cx="57.800" cy="1386.800" r="11.500" fill="#c42b1c"/><text x="57.800" y="1393" font-size="17" fill="#fff" text-anchor="middle">3</text>
<text x="76.600" y="1395.500" font-size="18" fill="#1c1c1c" textLength="37" lengthAdjust="spacingAndGlyphs">22°C</text>
<g transform="translate(75.9,1419.7)" fill="#333"><text x="0" y="0" font-size="17">阴</text></g>
<rect x="632.8" y="1384.5" width="16.600" height="16.400" rx="1" fill="url(#tw)"/>
<rect x="651" y="1384.5" width="16.600" height="16.400" rx="1" fill="url(#tw)"/>
<rect x="632.8" y="1402.5" width="16.600" height="16.400" rx="1" fill="url(#tw)"/>
<rect x="651" y="1402.5" width="16.600" height="16.400" rx="1" fill="url(#tw)"/>
<rect x="689.700" y="1378" width="326.600" height="45" rx="22.500" fill="#f3f2f7" stroke="#cfcdd8" stroke-width="1"/>
<circle cx="715" cy="1398" r="8" fill="none" stroke="#222" stroke-width="2.400"/><path d="M720.500 1404l6.500 7" stroke="#222" stroke-width="2.800" stroke-linecap="round"/>
<g transform="translate(744.2,1408.5)" fill="#4a4a4a"><text x="0" y="0" font-size="20.5">搜索</text></g>
<g transform="translate(1053.8,1401)"><rect x="-7" y="-17" width="25" height="23" rx="2" fill="#f4f4f6" stroke="#d8d8dc"/><rect x="-18" y="-7" width="27" height="24" rx="2" fill="#2a2a2a"/><rect x="-7" y="-7" width="16" height="13" fill="#d0d0d0"/></g>
<g transform="translate(1120,1401)"><path d="M-18-14h12l4 4h20v22h-36z" fill="#f0b820"/><path d="M-18-7h36v22a2 2 0 0 1-2 2h-32a2 2 0 0 1-2-2z" fill="#ffd860"/><rect x="-11" y="6" width="22" height="11" rx="2" fill="#1a78d8"/><rect x="-6" y="9" width="12" height="2.500" fill="#0a50a0"/></g>
<g transform="translate(1186,1401)"><circle r="18" fill="url(#ted)"/><path d="M-2-18a18 18 0 0 1 20 18c0 6-5 9-10 9-4 0-6-2-5-4 3-4 3-9-1-12-5-4-13-3-18 2 2-8 8-12 14-13z" fill="url(#ted2)"/><path d="M-17 5c0-9 9-14 16-10-4 1-7 5-6 10 1 7 8 11 15 9-8 7-23 3-25-9z" fill="#0b55a8"/><path d="M2 2c-3 2-3 5 0 7 5 2 12 0 16-5-4 2-9 2-11 0-2-1-3-2-5-2z" fill="#e1dfea"/></g>
<rect x="1180" y="1425" width="11" height="4" rx="2" fill="#8a8a92"/>
<g transform="translate(1251,1401)"><path d="M0-18l15 9v18l-15 9-15-9v-18z" fill="#3a3e46"/><path d="M0-18l15 9-15 7-15-7z" fill="#8a9098"/><path d="M0-10l9 15-16 3z" fill="#22252a"/><path d="M-7 8l16-3-2 6z" fill="#b0b6c0"/><path d="M0-18l15 9v18l-15 9-15-9v-18z" fill="none" stroke="#1e2024" stroke-width="1.500"/></g>
<g transform="translate(1318,1401)"><rect x="-18" y="-18" width="36" height="36" rx="8" fill="#fa3a4c"/><circle r="10" fill="none" stroke="#fff" stroke-width="2.800"/><circle cx="0" cy="1" r="4" fill="none" stroke="#fff" stroke-width="2.500"/><path d="M1-13c2 4 2 8 3 14" stroke="#fff" stroke-width="2.500" fill="none"/></g>
<g transform="translate(1383.5,1401)"><path d="M-8-12v-3a4 4 0 0 1 4-3h8a4 4 0 0 1 4 3v3" fill="none" stroke="#38a0e8" stroke-width="2.500"/><rect x="-18" y="-12" width="36" height="29" rx="3" fill="#1c4a8c"/><rect x="-8" y="-5" width="7" height="7" fill="#f25022"/><rect x="1" y="-5" width="7" height="7" fill="#7fba00"/><rect x="-8" y="4" width="7" height="7" fill="#00a4ef"/><rect x="1" y="4" width="7" height="7" fill="#ffb900"/></g>
<g transform="translate(1450.3,1401)"><rect x="-18" y="-18" width="36" height="36" fill="url(#tma)"/><path d="M-14 8l10-16h5l-10 16zM-4 8l10-16h5v16h-5v-9l-6 9z" fill="#f4f4ff"/></g>
<g transform="translate(1516,1401)"><rect x="-18" y="-18" width="36" height="36" rx="2" fill="#107c10"/><circle r="13" fill="#f4f4f4"/><path d="M-9-8c5 3 7 6 9 9 2-3 4-6 9-9-2-3-6-4-9-2-3-2-7-1-9 2z" fill="#107c10"/><path d="M-11 8c1-6 5-10 8-13M11 8c-1-6-5-10-8-13" stroke="#107c10" stroke-width="3" fill="none"/></g>
<circle cx="1530.500" cy="1388.500" r="11.700" fill="#0a74d0"/><text x="1530.500" y="1395" font-size="18" fill="#fff" text-anchor="middle">1</text>
<g transform="translate(1582.2,1401)"><rect x="-18" y="-18" width="36" height="36" rx="7" fill="#3c8cf0"/><path d="M-12-6c8-2 14 0 18 5l8-9c-1 8-4 14-10 17l2 8-8-7c-4 0-8-2-9-6l8 1c-2-4-5-7-9-9z" fill="#fff"/></g>
<g transform="translate(1648,1401)"><rect x="-18" y="-18" width="36" height="36" fill="#06ae1e"/><ellipse cx="-3" cy="-3" rx="11" ry="9" fill="#fff"/><ellipse cx="6" cy="5" rx="9" ry="7.500" fill="#fff" stroke="#06ae1e" stroke-width="1.500"/><circle cx="-7" cy="-5" r="1.500" fill="#06ae1e"/><circle cx="1" cy="-5" r="1.500" fill="#06ae1e"/><circle cx="3" cy="3" r="1.200" fill="#06ae1e"/><circle cx="9" cy="3" r="1.200" fill="#06ae1e"/></g>
<rect x="1642.500" y="1425" width="11" height="4" rx="2" fill="#8a8a92"/>
<g transform="translate(1715,1401)"><rect x="-18" y="-18" width="36" height="36" rx="8" fill="#fafafa"/><ellipse cx="0" cy="0" rx="9" ry="12" fill="#111"/><ellipse cx="0" cy="5" rx="6" ry="7" fill="#fff"/><ellipse cx="-3" cy="-6" rx="2" ry="3" fill="#fff"/><ellipse cx="3" cy="-6" rx="2" ry="3" fill="#fff"/><path d="M-9 0c4 3 14 3 18 0l1 4c-5 3-15 3-20 0z" fill="#e02020"/><ellipse cx="0" cy="-2" rx="4" ry="1.500" fill="#f8a010"/><ellipse cx="-5" cy="13" rx="5" ry="2.500" fill="#f8a010"/><ellipse cx="5" cy="13" rx="5" ry="2.500" fill="#f8a010"/></g>
<g transform="translate(1780,1401)"><rect x="-18" y="-18" width="36" height="36" rx="9" fill="#0c0c0c"/><path d="M-2-12h9l-2 5h-4v13a7 7 0 1 1-5-7z" fill="url(#tqm)"/><path d="M-12 3h22" stroke="#0c0c0c" stroke-width="2"/></g>
<g transform="translate(1912,1401)"><rect x="-18" y="-18" width="36" height="36" rx="9" fill="#0c0c0c"/><path d="M-2-12h9l-2 5h-4v13a7 7 0 1 1-5-7z" fill="url(#tqm)"/><path d="M-12 3h22" stroke="#0c0c0c" stroke-width="2"/></g>
<rect x="1906.500" y="1425" width="11" height="4" rx="2" fill="#8a8a92"/>
<rect x="1822" y="1373.500" width="52" height="55" rx="5" fill="#f0eef4" stroke="#d8d6e0"/><rect x="1818.500" y="1373.500" width="52" height="55" rx="5" fill="#f6f4f8" stroke="#dcdae4"/>
<g transform="translate(1846,1401)"><rect x="-18" y="-18" width="36" height="36" fill="#f7e0d8"/><path d="M-13 14l10-28h7l10 28h-7l-2-7h-9l-2 7zM-3 2h7l-3.500-11z" fill="url(#gr)"/></g>
<rect x="1834" y="1425" width="24" height="4" rx="2" fill="#0a68c8"/>
<path d="M2140 1405l8-8 8 8" fill="none" stroke="#222" stroke-width="2"/>
<path d="M2186 1408a6 6 0 0 1 1-11 8 8 0 0 1 15 1 5.500 5.500 0 0 1 0 10z" fill="#9a9aa2" stroke="#333" stroke-width="1.500"/>
<g transform="translate(2241,1401)"><path d="M-9-2a9 9 0 0 1 16-5M9 2a9 9 0 0 1-16 5" fill="none" stroke="#222" stroke-width="1.800"/><path d="M8-11v5h-5M-8 11v-5h5" fill="none" stroke="#222" stroke-width="1.800"/><circle cx="8" cy="7" r="5.500" fill="#f7931e"/></g>
<g transform="translate(2279.5,1408.2)" fill="#1c1c1c"><text x="0" y="0" font-size="21">中</text></g>
<g transform="translate(2338.8,1404)"><path d="M-12-5a17 17 0 0 1 24 0M-8-1a11.500 11.500 0 0 1 16 0M-4 3a6 6 0 0 1 8 0" fill="none" stroke="#222" stroke-width="1.900"/><circle cx="0" cy="7" r="1.800" fill="#222"/></g>
<g transform="translate(2371,1401)"><path d="M-9-3h4l6-5v17l-6-5h-4z" fill="none" stroke="#222" stroke-width="1.700" stroke-linejoin="round"/><path d="M5-4a6 6 0 0 1 0 9" fill="none" stroke="#222" stroke-width="1.600"/><path d="M8-7a10 10 0 0 1 0 15" fill="none" stroke="#999" stroke-width="1.600"/></g>
<g transform="translate(2410.6,1401)"><rect x="-10" y="-6" width="21" height="12" rx="3" fill="none" stroke="#222" stroke-width="1.800"/><rect x="12" y="-2" width="2.500" height="4" fill="#222"/><rect x="-7" y="-3" width="6" height="6" fill="#222"/><path d="M-10-5l4-7-1 5h4l-5 7z" fill="#222"/></g>
<text x="2531" y="1395.500" font-size="18" fill="#1c1c1c" text-anchor="end" textLength="44" lengthAdjust="spacingAndGlyphs">10:40</text>
<text x="2531" y="1419.500" font-size="18" fill="#1c1c1c" text-anchor="end" textLength="82" lengthAdjust="spacingAndGlyphs">2025/5/28</text>
</svg></body></html>
